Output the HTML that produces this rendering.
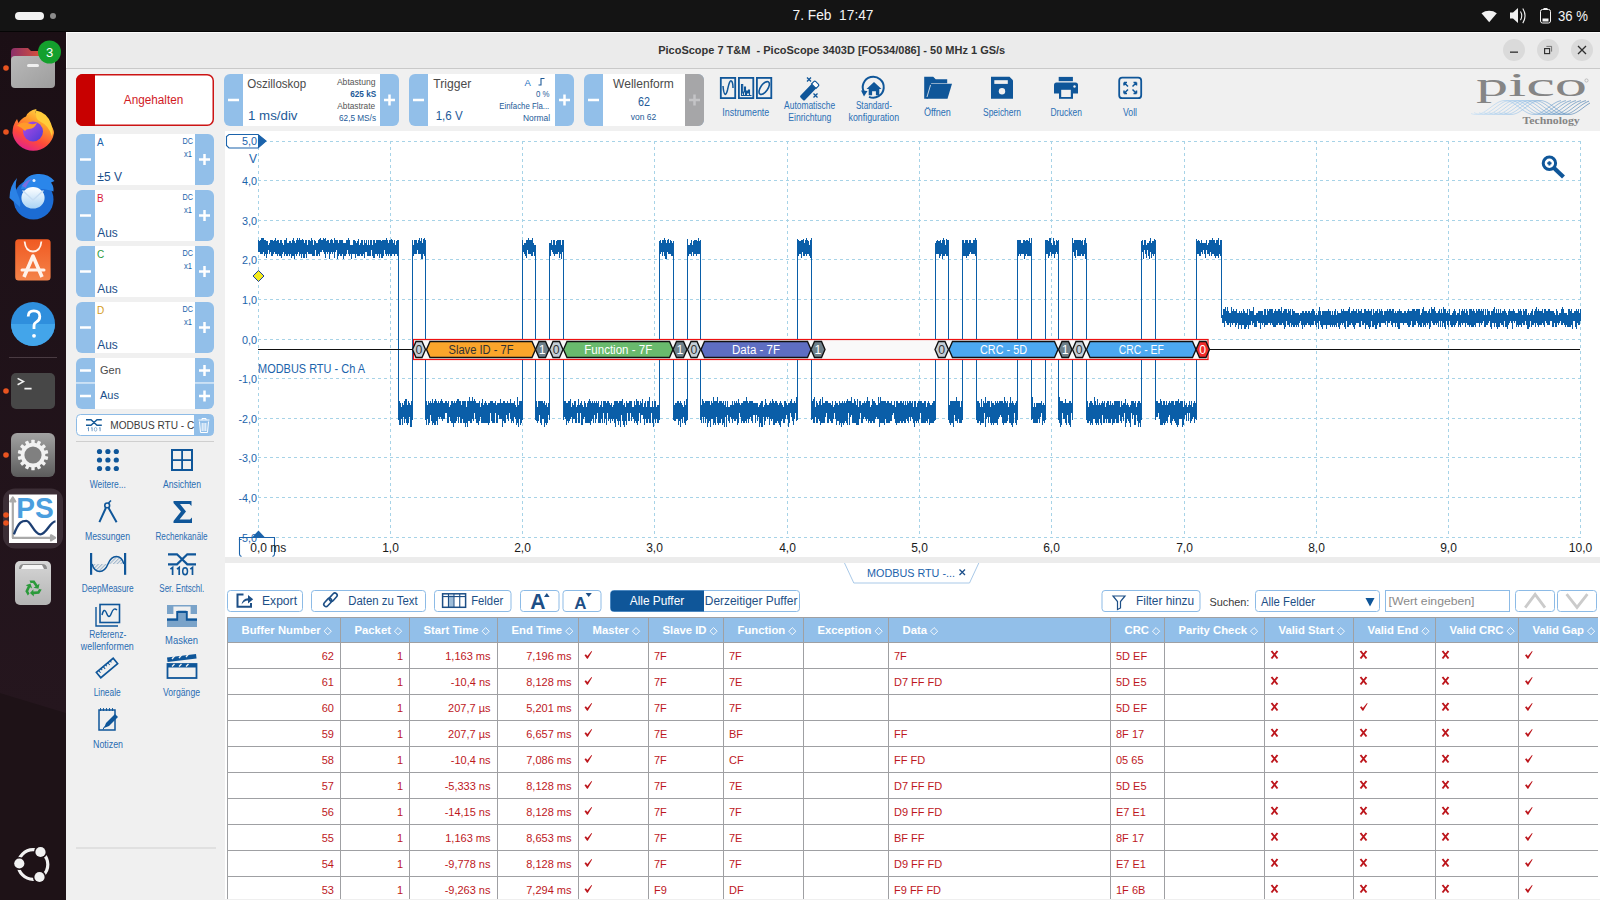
<!DOCTYPE html>
<html><head><meta charset="utf-8"><title>PicoScope 7 T&amp;M</title>
<style>html,body{margin:0;padding:0;background:#fff;overflow:hidden}svg{display:block}text{font-family:"Liberation Sans",sans-serif;white-space:pre}</style></head>
<body><svg width="1600" height="900" viewBox="0 0 1600 900">
<rect x="0" y="0" width="1600" height="31" fill="#141414" />
<rect x="0" y="31" width="1600" height="1" fill="#050505" />
<rect x="15" y="12" width="29" height="8" fill="#f2f2f2" rx="4" />
<circle cx="53" cy="16" r="3" fill="#8c8c8c"/>
<text x="792.5" y="19.9" font-size="14" fill="#f4f4f4" textLength="81" lengthAdjust="spacingAndGlyphs" >7. Feb  17:47</text>
<path d="M1481.5 13.2 A 13 13 0 0 1 1496.8 13.2 L1489.2 22.2 Z" fill="#f2f2f2" />
<path d="M1510 12.5 h3 l5 -4.5 v15 l-5 -4.5 h-3 z" fill="#f2f2f2" />
<path d="M1520.5 11.5 q2.5 4.3 0 8.6 M1522.8 8.5 q4.5 7.3 0 14.6" fill="none" stroke="#f2f2f2" stroke-width="1.1" />
<rect x="1540.5" y="9.5" width="10" height="13.5" fill="none" rx="2" stroke="#f2f2f2" stroke-width="1" />
<rect x="1543.5" y="8" width="4" height="1.5" fill="#f2f2f2" />
<rect x="1542.5" y="18.5" width="6" height="3" fill="#f2f2f2" />
<text x="1558" y="20.5" font-size="14" fill="#f4f4f4" textLength="30" lengthAdjust="spacingAndGlyphs" >36 %</text>
<defs><linearGradient id="dockg" x1="0" y1="0" x2="0" y2="1"><stop offset="0" stop-color="#1b0f15"/><stop offset="1" stop-color="#25161e"/></linearGradient></defs>
<rect x="0" y="32" width="66" height="868" fill="#1e1217" />
<path d="M0 32 H66 V713 L0 693 Z" fill="url(#dockg)" />
<defs><linearGradient id="fold" x1="0" x2="1"><stop offset="0" stop-color="#8b2f6a"/><stop offset="1" stop-color="#d8503a"/></linearGradient><linearGradient id="fgray" x1="0" y1="0" x2="1" y2="1"><stop offset="0" stop-color="#b9b9b9"/><stop offset="1" stop-color="#9d9d9d"/></linearGradient><linearGradient id="ffx" x1="0" y1="0" x2="0" y2="1"><stop offset="0" stop-color="#ffbd2e"/><stop offset="0.55" stop-color="#ff5a2a"/><stop offset="1" stop-color="#e3258f"/></linearGradient><linearGradient id="tbd" x1="0" y1="0" x2="0" y2="1"><stop offset="0" stop-color="#3a8fe8"/><stop offset="1" stop-color="#1a5fc8"/></linearGradient><linearGradient id="apc" x1="0" y1="0" x2="0" y2="1"><stop offset="0" stop-color="#f05a22"/><stop offset="1" stop-color="#f4834a"/></linearGradient><linearGradient id="stg" x1="0" y1="0" x2="0" y2="1"><stop offset="0" stop-color="#a2a2a2"/><stop offset="1" stop-color="#5c5c5c"/></linearGradient><linearGradient id="trs" x1="0" y1="0" x2="0" y2="1"><stop offset="0" stop-color="#d6d6d6"/><stop offset="1" stop-color="#b4b4b4"/></linearGradient></defs>
<path d="M11 52 q0 -4 4 -4 h13 l3 3 h9 v10 h-29 z" fill="url(#fold)" />
<rect x="11" y="56" width="44" height="32" fill="url(#fgray)" rx="4" />
<rect x="27" y="64" width="12" height="3" fill="#f0f0f0" rx="1.5" />
<circle cx="49.5" cy="52" r="11.5" fill="#14a02d"/>
<text x="49.5" y="57" font-size="13" fill="#ffffff" text-anchor="middle" >3</text>
<circle cx="6" cy="68" r="2.8" fill="#e95420"/>
<defs><linearGradient id="ffx2" x1="0.8" y1="0" x2="0.3" y2="1"><stop offset="0" stop-color="#ffe14a"/><stop offset="0.35" stop-color="#ff9a2a"/><stop offset="0.7" stop-color="#ff4a3a"/><stop offset="1" stop-color="#e0208f"/></linearGradient><linearGradient id="ffg" x1="0" y1="0" x2="1" y2="1"><stop offset="0" stop-color="#b24ce6"/><stop offset="1" stop-color="#4b3ad6"/></linearGradient><linearGradient id="tbb" x1="0" y1="0" x2="0" y2="1"><stop offset="0" stop-color="#ffffff"/><stop offset="1" stop-color="#a9d3f5"/></linearGradient></defs>
<path d="M12.5 133 q0 -8 4.5 -14 l1.5 4 q3 -5 7.5 -6.5 q2 -6 10.5 -7.5 q-2 4 1 7 q16 7 16.5 17 a21 21 0 0 1 -41.5 0z" fill="url(#ffx2)" />
<circle cx="33" cy="131.5" r="10" fill="url(#ffg)"/>
<path d="M17 125.5 q5 -5 12 -2 q5 2 8 -1 q-2 6 -8 6.5 q-3 0 -4 2 q-3 -3.5 -8 -5.5z" fill="#ff9a2a" />
<path d="M36 110.5 q11 2 15 13 q2.5 7 1 13 q-3 -11 -12 -15 q-5 -2 -4 -11z" fill="#ffcc3a" />
<path d="M43 131 a10 10 0 0 1 -20 0 q3 6 10 6 q6 0 10 -6z" fill="#ff6a2a" opacity="0.0"/>
<circle cx="6" cy="132" r="2.8" fill="#e95420"/>
<circle cx="33.5" cy="199.5" r="20" fill="#1c6cd4"/>
<path d="M9.5 198 q0 -12 7.5 -20 q-3 9 1 17 q3 6 2 12 z" fill="#2b82e6" />
<path d="M21 189 q3 -14 16 -15 q11 -1 17.5 7 l-3.5 1.5 q3 4 2.5 9 q-10 -4 -32.5 -2.5z" fill="#2a86ea" />
<path d="M22 186 q4 -6 10 -7 q-5 4 -6 9 z" fill="#7a6ee0" />
<circle cx="34" cy="180.5" r="1.5" fill="#e6f2ff"/>
<ellipse cx="33" cy="197.8" rx="11.6" ry="10.8" fill="url(#tbb)"/>
<path d="M22.5 190.5 L33 200 L43.5 190.5" fill="none" stroke="#c6dcf2" stroke-width="1.3" />
<rect x="15.2" y="239.2" width="35.4" height="41.4" fill="url(#apc)" rx="3.5" />
<path d="M24.6 241.5 q1 10 8.4 10 q7.4 0 8.4 -10" fill="none" stroke="#fff2ea" stroke-width="1.8" />
<path d="M24 277 l9 -21 l9 21" fill="none" stroke="#fff2ea" stroke-width="3.6" stroke-linejoin="round"/>
<rect x="20.5" y="268.5" width="25" height="3" fill="#fff2ea" rx="1.5" />
<circle cx="33" cy="324" r="22" fill="#2f8fdd"/>
<path d="M11 324 a22 22 0 0 0 44 0 z" fill="#43a5ea" />
<path d="M28.2 316.5 q0 -5.6 5.6 -5.6 q6 0 6 5.6 q0 3.6 -3.6 5.6 q-2.2 1.2 -2.2 4 v3" fill="none" stroke="#ffffff" stroke-width="2.8" />
<circle cx="34" cy="335.8" r="1.9" fill="#ffffff"/>
<rect x="9" y="357" width="48" height="1" fill="#4a3b42" />
<rect x="11" y="373" width="44" height="36" fill="#474747" rx="5" />
<path d="M17.6 378.4 l5.8 3.2 l-5.8 3.2 M24.4 388.6 h7.2" fill="none" stroke="#f2f2f2" stroke-width="1.6" />
<circle cx="6" cy="391" r="2.8" fill="#e95420"/>
<rect x="11" y="433" width="44" height="44" fill="url(#stg)" rx="6" />
<g transform="translate(33 455)">
<rect x="-1.7" y="-15.3" width="3.4" height="4" rx="0.6" fill="#f2f2f2" transform="rotate(0.00)"/>
<rect x="-1.7" y="-15.3" width="3.4" height="4" rx="0.6" fill="#f2f2f2" transform="rotate(25.71)"/>
<rect x="-1.7" y="-15.3" width="3.4" height="4" rx="0.6" fill="#f2f2f2" transform="rotate(51.43)"/>
<rect x="-1.7" y="-15.3" width="3.4" height="4" rx="0.6" fill="#f2f2f2" transform="rotate(77.14)"/>
<rect x="-1.7" y="-15.3" width="3.4" height="4" rx="0.6" fill="#f2f2f2" transform="rotate(102.86)"/>
<rect x="-1.7" y="-15.3" width="3.4" height="4" rx="0.6" fill="#f2f2f2" transform="rotate(128.57)"/>
<rect x="-1.7" y="-15.3" width="3.4" height="4" rx="0.6" fill="#f2f2f2" transform="rotate(154.29)"/>
<rect x="-1.7" y="-15.3" width="3.4" height="4" rx="0.6" fill="#f2f2f2" transform="rotate(180.00)"/>
<rect x="-1.7" y="-15.3" width="3.4" height="4" rx="0.6" fill="#f2f2f2" transform="rotate(205.71)"/>
<rect x="-1.7" y="-15.3" width="3.4" height="4" rx="0.6" fill="#f2f2f2" transform="rotate(231.43)"/>
<rect x="-1.7" y="-15.3" width="3.4" height="4" rx="0.6" fill="#f2f2f2" transform="rotate(257.14)"/>
<rect x="-1.7" y="-15.3" width="3.4" height="4" rx="0.6" fill="#f2f2f2" transform="rotate(282.86)"/>
<rect x="-1.7" y="-15.3" width="3.4" height="4" rx="0.6" fill="#f2f2f2" transform="rotate(308.57)"/>
<rect x="-1.7" y="-15.3" width="3.4" height="4" rx="0.6" fill="#f2f2f2" transform="rotate(334.29)"/>
<circle r="12.3" fill="#f2f2f2"/><circle r="8.6" fill="#808080"/></g>
<circle cx="6" cy="455" r="2.8" fill="#e95420"/>
<rect x="3" y="488.5" width="60" height="60" fill="#3c2e36" rx="12" />
<rect x="9" y="494.5" width="48" height="48.5" fill="#ffffff" />
<path d="M12.8 538 V499 M10.3 501.5 l2.5 -4 l2.5 4 z M12 537.8 H53 M51 535.3 l4 2.5 l-4 2.5 z" fill="none" stroke="#a9a9a9" stroke-width="2.2" stroke-linejoin="round"/>
<text x="16.2" y="518.3" font-size="30" fill="#4a9ede" font-weight="bold" textLength="37.5" lengthAdjust="spacingAndGlyphs" >PS</text>
<path d="M13.9 534.3 C 19 521, 22 520.8, 26.4 520.8 S 34 534.3, 40.3 534.3 S 50 521.4, 55.5 521.4" fill="none" stroke="#1d3f73" stroke-width="2.3" />
<circle cx="6" cy="515" r="2.8" fill="#e95420"/><circle cx="6" cy="523" r="2.8" fill="#e95420"/>
<rect x="15" y="561" width="36" height="44" fill="url(#trs)" rx="5" />
<path d="M19 569 q0 -5 5 -5 h18 q5 0 5 5 z" fill="#8c8c8c" />
<path d="M21 569 l2 -4 h19 l2 4 z" fill="#f6f6f6" />
<g transform="translate(33 588.5)" fill="#2b9a3a">
<path transform="rotate(0)" d="M-3.5 -8 h5 l3 4.5 l2 -1.2 l-1 5 l-5 -1 l2 -1.2 l-2.5 -3.6 h-2.5 z"/>
<path transform="rotate(120)" d="M-3.5 -8 h5 l3 4.5 l2 -1.2 l-1 5 l-5 -1 l2 -1.2 l-2.5 -3.6 h-2.5 z"/>
<path transform="rotate(240)" d="M-3.5 -8 h5 l3 4.5 l2 -1.2 l-1 5 l-5 -1 l2 -1.2 l-2.5 -3.6 h-2.5 z"/>
</g>
<circle cx="33" cy="864.5" r="14.8" fill="none" stroke="#f2f2f2" stroke-width="3.2"/>
<circle cx="40.5" cy="852" r="6.6" fill="#1e1217"/><circle cx="40.5" cy="852" r="5.1" fill="#f2f2f2"/>
<circle cx="19.3" cy="863.5" r="6.6" fill="#1e1217"/><circle cx="19.3" cy="863.5" r="5.1" fill="#f2f2f2"/>
<circle cx="39.5" cy="877" r="6.6" fill="#1e1217"/><circle cx="39.5" cy="877" r="5.1" fill="#f2f2f2"/>
<rect x="66" y="32" width="1534" height="36" fill="#ebebeb" />
<rect x="66" y="32" width="1534" height="1" fill="#fbfbfb" />
<rect x="66" y="32" width="1" height="37" fill="#fbfbfb" />
<rect x="66" y="68" width="1534" height="1" fill="#c9c9c9" />
<text x="658.2" y="54.2" font-size="11.3" fill="#333333" font-weight="bold" textLength="347" lengthAdjust="spacingAndGlyphs" >PicoScope 7 T&amp;M  - PicoScope 3403D [FO534/086] - 50 MHz 1 GS/s</text>
<circle cx="1514" cy="50" r="11" fill="#dadada"/>
<circle cx="1548" cy="50" r="11" fill="#dadada"/>
<circle cx="1582" cy="50" r="11" fill="#dadada"/>
<rect x="1510" y="51.5" width="8" height="1.3" fill="#2e2e2e" />
<rect x="1544.6" y="48.6" width="5" height="5" fill="none" stroke="#2e2e2e" stroke-width="1.15" />
<path d="M1546.4 46.4 h5.2 v5.2" fill="none" stroke="#5a5a5a" stroke-width="0.8" />
<path d="M1578 46 l8 8 M1586 46 l-8 8" fill="none" stroke="#2e2e2e" stroke-width="1.3" />
<rect x="66" y="69" width="1534" height="62" fill="#f0f0f0" />
<rect x="66" y="131" width="159" height="769" fill="#f0f0f0" />
<rect x="76.75" y="74.75" width="136.5" height="50.5" fill="#ffffff" rx="6" stroke="#cc1414" stroke-width="1.5" />
<path d="M82.5 74 h12.5 v52 h-12.5 a6.5 6.5 0 0 1 -6.5 -6.5 v-39 a6.5 6.5 0 0 1 6.5 -6.5z" fill="#c80000" />
<text x="123.8" y="104.3" font-size="12" fill="#d11a1f" textLength="59.5" lengthAdjust="spacingAndGlyphs" >Angehalten</text>
<rect x="224" y="74" width="175" height="52" fill="#92bfe9" rx="6" />
<rect x="243" y="74" width="137" height="52" fill="#ffffff" />
<rect x="228.0" y="98.75" width="11" height="2.5" fill="#ffffff" />
<rect x="384.0" y="98.75" width="11" height="2.5" fill="#ffffff" />
<rect x="388.25" y="94.5" width="2.5" height="11" fill="#ffffff" />
<text x="247.2" y="88" font-size="12" fill="#4a4a4a" textLength="59" lengthAdjust="spacingAndGlyphs" >Oszilloskop</text>
<text x="248" y="120" font-size="13" fill="#1d5a98" textLength="49.5" lengthAdjust="spacingAndGlyphs" >1 ms/div</text>
<text x="375.6" y="85" font-size="9" fill="#555555" text-anchor="end" textLength="38.7" lengthAdjust="spacingAndGlyphs" >Abtastung</text>
<text x="376.2" y="97" font-size="9" fill="#1d5a98" font-weight="bold" text-anchor="end" textLength="26" lengthAdjust="spacingAndGlyphs" >625 kS</text>
<text x="375.2" y="108.7" font-size="9" fill="#555555" text-anchor="end" textLength="38" lengthAdjust="spacingAndGlyphs" >Abtastrate</text>
<text x="376" y="120.6" font-size="9" fill="#1d5a98" text-anchor="end" textLength="37" lengthAdjust="spacingAndGlyphs" >62,5 MS/s</text>
<rect x="409" y="74" width="165" height="52" fill="#92bfe9" rx="6" />
<rect x="428" y="74" width="127" height="52" fill="#ffffff" />
<rect x="413.0" y="98.75" width="11" height="2.5" fill="#ffffff" />
<rect x="559.0" y="98.75" width="11" height="2.5" fill="#ffffff" />
<rect x="563.25" y="94.5" width="2.5" height="11" fill="#ffffff" />
<text x="433.2" y="87.5" font-size="12" fill="#4a4a4a" textLength="38" lengthAdjust="spacingAndGlyphs" >Trigger</text>
<text x="435.7" y="120" font-size="13" fill="#1d5a98" textLength="27" lengthAdjust="spacingAndGlyphs" >1,6 V</text>
<text x="524.5" y="85.5" font-size="9.5" fill="#1d6fc0" >A</text>
<path d="M538.5 85 h2.5 v-6.5 h3.5" fill="none" stroke="#1d5a98" stroke-width="1.1" />
<text x="549.5" y="97" font-size="9" fill="#1d5a98" text-anchor="end" textLength="13.5" lengthAdjust="spacingAndGlyphs" >0 %</text>
<text x="549.3" y="108.7" font-size="9" fill="#1d5a98" text-anchor="end" textLength="50" lengthAdjust="spacingAndGlyphs" >Einfache Fla...</text>
<text x="550" y="120.7" font-size="9" fill="#1d5a98" text-anchor="end" textLength="27" lengthAdjust="spacingAndGlyphs" >Normal</text>
<rect x="584" y="74" width="120" height="52" fill="#92bfe9" rx="6" />
<path d="M685 74 h13 a6 6 0 0 1 6 6 v40 a6 6 0 0 1 -6 6 h-13 z" fill="#a6a6a8" />
<rect x="603" y="74" width="82" height="52" fill="#ffffff" />
<rect x="588.0" y="98.75" width="11" height="2.5" fill="#ffffff" />
<rect x="689.0" y="98.75" width="11" height="2.5" fill="#c4c4c6" />
<rect x="693.25" y="94.5" width="2.5" height="11" fill="#c4c4c6" />
<text x="643.4" y="87.5" font-size="12" fill="#4a4a4a" text-anchor="middle" textLength="60.7" lengthAdjust="spacingAndGlyphs" >Wellenform</text>
<text x="644" y="105.7" font-size="12" fill="#1d5a98" text-anchor="middle" textLength="12" lengthAdjust="spacingAndGlyphs" >62</text>
<text x="643.5" y="120" font-size="9" fill="#1d5a98" text-anchor="middle" textLength="25.5" lengthAdjust="spacingAndGlyphs" >von 62</text>
<rect x="720.8" y="77.9" width="14.4" height="20.2" fill="none" stroke="#0f5699" stroke-width="1.8" />
<rect x="738.9" y="77.9" width="14.4" height="20.2" fill="none" stroke="#0f5699" stroke-width="1.8" />
<rect x="756.9" y="77.9" width="14.4" height="20.2" fill="none" stroke="#0f5699" stroke-width="1.8" />
<path d="M723 86 C 724 97, 726 96, 727.5 90 C 729 83, 730 80, 731.5 81 C 732.5 82, 733 86, 733 88" fill="none" stroke="#0f5699" stroke-width="1.5" />
<path d="M741 95.5 h10.5 M741.5 95.5 v-11 h1.2 v9 M743.5 95 v-3 h1 v-5 h1 v8 M746.5 95 v-4 h1 v2 h1 v-3 h1 v5" fill="none" stroke="#0f5699" stroke-width="1.1" />
<ellipse cx="764.2" cy="88" rx="3.6" ry="7.4" transform="rotate(35 764.2 88)" fill="none" stroke="#0f5699" stroke-width="1.6"/>
<text x="745.8" y="115.7" font-size="10" fill="#2a6fb5" text-anchor="middle" textLength="47" lengthAdjust="spacingAndGlyphs" >Instrumente</text>
<path d="M800.5 95.5 l12 -12.5 l4.5 4.5 l-12 12.5 q-1 1 -2 0 l-2.5 -2.5 q-1 -1 0 -2z" fill="#0f5699" />
<path d="M811.5 84 l2.3 -2.3 q1 -1 2 0 l2.5 2.5 q1 1 0 2 l-2.3 2.3 z" fill="#ffffff" stroke="#0f5699" stroke-width="1.1" />
<path d="M807 77.5 l4 4 M811 77.5 l-4 4 M813.5 93.5 l4 4 M817.5 93.5 l-4 4" fill="none" stroke="#0f5699" stroke-width="1.3" />
<text x="809.6" y="109.4" font-size="10" fill="#2a6fb5" text-anchor="middle" textLength="51" lengthAdjust="spacingAndGlyphs" >Automatische</text>
<text x="809.8" y="121.3" font-size="10" fill="#2a6fb5" text-anchor="middle" textLength="43" lengthAdjust="spacingAndGlyphs" >Einrichtung</text>
<path d="M864.5 93 A 10.5 10.5 0 1 1 869 96.8" fill="none" stroke="#0f5699" stroke-width="2" />
<path d="M861 90.5 l6.5 0.5 l-3.5 5.5 z" fill="#0f5699" />
<path d="M866.5 89 l7.5 -7 l7.5 7 h-2.2 v6.2 h-3.4 v-4 h-3.8 v4 h-3.4 v-6.2z" fill="#0f5699" />
<text x="873.9" y="109.4" font-size="10" fill="#2a6fb5" text-anchor="middle" textLength="36" lengthAdjust="spacingAndGlyphs" >Standard-</text>
<text x="873.8" y="121.3" font-size="10" fill="#2a6fb5" text-anchor="middle" textLength="50.5" lengthAdjust="spacingAndGlyphs" >konfiguration</text>
<path d="M924.2 98.8 v-22 h9 l2.5 2.5 h11.5 v4 h-16 l-3.5 15.5 z" fill="#0f5699" />
<path d="M926.5 98.8 l4.5 -15 h21 l-4.5 15 z" fill="#0f5699" />
<path d="M927 97 l3.5 -12" fill="none" stroke="#f0f0f0" stroke-width="0.8" />
<text x="937.4" y="115.7" font-size="10" fill="#2a6fb5" text-anchor="middle" textLength="27" lengthAdjust="spacingAndGlyphs" >Öffnen</text>
<path d="M991 76.8 h18.5 l3.5 3.5 v18.5 h-22 z" fill="#0f5699" />
<rect x="994.3" y="80.2" width="13.5" height="3.7" fill="#f0f0f0" />
<circle cx="1002" cy="91.2" r="3.2" fill="#f0f0f0"/>
<text x="1002" y="115.7" font-size="10" fill="#2a6fb5" text-anchor="middle" textLength="38" lengthAdjust="spacingAndGlyphs" >Speichern</text>
<rect x="1058.7" y="76.9" width="14.2" height="4.3" fill="#0f5699" />
<path d="M1054 85 q0 -2.5 2.5 -2.5 h19 q2.5 0 2.5 2.5 v8.5 h-24z" fill="#0f5699" />
<rect x="1059" y="87.5" width="14" height="11.3" fill="#0f5699" />
<rect x="1061.2" y="89.8" width="9.6" height="7.2" fill="#f0f0f0" />
<circle cx="1074.5" cy="86.5" r="1.2" fill="#f0f0f0"/>
<text x="1066.2" y="115.7" font-size="10" fill="#2a6fb5" text-anchor="middle" textLength="31.5" lengthAdjust="spacingAndGlyphs" >Drucken</text>
<rect x="1119.2" y="77.7" width="22" height="20.5" fill="none" rx="3" stroke="#0f5699" stroke-width="1.8" />
<path d="M1124 82.5 l4 4 M1124 82.5 h3 M1124 82.5 v3 M1136.5 82.5 l-4 4 M1136.5 82.5 h-3 M1136.5 82.5 v3 M1124 93.5 l4 -4 M1124 93.5 h3 M1124 93.5 v-3 M1136.5 93.5 l-4 -4 M1136.5 93.5 h-3 M1136.5 93.5 v-3" fill="none" stroke="#0f5699" stroke-width="1.5" />
<text x="1130" y="115.7" font-size="10" fill="#2a6fb5" text-anchor="middle" textLength="14" lengthAdjust="spacingAndGlyphs" >Voll</text>
<defs><linearGradient id="wavg" gradientUnits="userSpaceOnUse" x1="1471" y1="0" x2="1590" y2="0"><stop offset="0" stop-color="#c3def5"/><stop offset="0.45" stop-color="#8fbde6"/><stop offset="1" stop-color="#2f6aa3"/></linearGradient></defs>
<text x="1476" y="96.3" font-size="33" fill="#858585" style="font-family:&quot;Liberation Serif&quot;,serif" textLength="111" lengthAdjust="spacingAndGlyphs" >pico</text>
<circle cx="1586.5" cy="80.5" r="1.6" fill="none" stroke="#a0a0a0" stroke-width="0.6"/>
<path d="M1471.0 113.50 L1473.0 114.13 L1475.0 114.46 L1477.0 114.46 L1479.0 114.13 L1481.0 113.50 L1483.0 112.58 L1485.0 111.43 L1487.0 110.09 L1489.0 108.63 L1491.0 107.12 L1493.0 105.63 L1495.0 104.22 L1497.0 102.97 L1499.0 101.93 L1501.0 101.15 L1503.0 100.66 L1505.0 100.50 L1507.0 100.66 L1509.0 101.15 L1511.0 101.93 L1513.0 102.97 L1515.0 104.22 L1517.0 105.63 L1519.0 107.12 L1521.0 108.63 L1523.0 110.09 L1525.0 111.43 L1527.0 112.58 L1529.0 113.50 L1531.0 114.13 L1533.0 114.46 L1535.0 114.46 L1537.0 114.13 L1539.0 113.50 L1541.0 112.58 L1543.0 111.43 L1545.0 110.09 L1547.0 108.63 L1549.0 107.12 L1551.0 105.63 L1553.0 104.22 L1555.0 102.97 L1557.0 101.93 L1559.0 101.15 L1561.0 100.66 M1474.0 112.58 L1476.0 113.50 L1478.0 114.13 L1480.0 114.46 L1482.0 114.46 L1484.0 114.13 L1486.0 113.50 L1488.0 112.58 L1490.0 111.43 L1492.0 110.09 L1494.0 108.63 L1496.0 107.12 L1498.0 105.63 L1500.0 104.22 L1502.0 102.97 L1504.0 101.93 L1506.0 101.15 L1508.0 100.66 L1510.0 100.50 L1512.0 100.66 L1514.0 101.15 L1516.0 101.93 L1518.0 102.97 L1520.0 104.22 L1522.0 105.63 L1524.0 107.12 L1526.0 108.63 L1528.0 110.09 L1530.0 111.43 L1532.0 112.58 L1534.0 113.50 L1536.0 114.13 L1538.0 114.46 L1540.0 114.46 L1542.0 114.13 L1544.0 113.50 L1546.0 112.58 L1548.0 111.43 L1550.0 110.09 L1552.0 108.63 L1554.0 107.12 L1556.0 105.63 L1558.0 104.22 L1560.0 102.97 L1562.0 101.93 L1564.0 101.15 L1566.0 100.66 M1479.0 112.58 L1481.0 113.50 L1483.0 114.13 L1485.0 114.46 L1487.0 114.46 L1489.0 114.13 L1491.0 113.50 L1493.0 112.58 L1495.0 111.43 L1497.0 110.09 L1499.0 108.63 L1501.0 107.12 L1503.0 105.63 L1505.0 104.22 L1507.0 102.97 L1509.0 101.93 L1511.0 101.15 L1513.0 100.66 L1515.0 100.50 L1517.0 100.66 L1519.0 101.15 L1521.0 101.93 L1523.0 102.97 L1525.0 104.22 L1527.0 105.63 L1529.0 107.12 L1531.0 108.63 L1533.0 110.09 L1535.0 111.43 L1537.0 112.58 L1539.0 113.50 L1541.0 114.13 L1543.0 114.46 L1545.0 114.46 L1547.0 114.13 L1549.0 113.50 L1551.0 112.58 L1553.0 111.43 L1555.0 110.09 L1557.0 108.63 L1559.0 107.12 L1561.0 105.63 L1563.0 104.22 L1565.0 102.97 L1567.0 101.93 L1569.0 101.15 L1571.0 100.66 M1484.0 112.58 L1486.0 113.50 L1488.0 114.13 L1490.0 114.46 L1492.0 114.46 L1494.0 114.13 L1496.0 113.50 L1498.0 112.58 L1500.0 111.43 L1502.0 110.09 L1504.0 108.63 L1506.0 107.12 L1508.0 105.63 L1510.0 104.22 L1512.0 102.97 L1514.0 101.93 L1516.0 101.15 L1518.0 100.66 L1520.0 100.50 L1522.0 100.66 L1524.0 101.15 L1526.0 101.93 L1528.0 102.97 L1530.0 104.22 L1532.0 105.63 L1534.0 107.12 L1536.0 108.63 L1538.0 110.09 L1540.0 111.43 L1542.0 112.58 L1544.0 113.50 L1546.0 114.13 L1548.0 114.46 L1550.0 114.46 L1552.0 114.13 L1554.0 113.50 L1556.0 112.58 L1558.0 111.43 L1560.0 110.09 L1562.0 108.63 L1564.0 107.12 L1566.0 105.63 L1568.0 104.22 L1570.0 102.97 L1572.0 101.93 L1574.0 101.15 L1576.0 100.66 M1489.0 112.58 L1491.0 113.50 L1493.0 114.13 L1495.0 114.46 L1497.0 114.46 L1499.0 114.13 L1501.0 113.50 L1503.0 112.58 L1505.0 111.43 L1507.0 110.09 L1509.0 108.63 L1511.0 107.12 L1513.0 105.63 L1515.0 104.22 L1517.0 102.97 L1519.0 101.93 L1521.0 101.15 L1523.0 100.66 L1525.0 100.50 L1527.0 100.66 L1529.0 101.15 L1531.0 101.93 L1533.0 102.97 L1535.0 104.22 L1537.0 105.63 L1539.0 107.12 L1541.0 108.63 L1543.0 110.09 L1545.0 111.43 L1547.0 112.58 L1549.0 113.50 L1551.0 114.13 L1553.0 114.46 L1555.0 114.46 L1557.0 114.13 L1559.0 113.50 L1561.0 112.58 L1563.0 111.43 L1565.0 110.09 L1567.0 108.63 L1569.0 107.12 L1571.0 105.63 L1573.0 104.22 L1575.0 102.97 L1577.0 101.93 L1579.0 101.15 L1581.0 100.66 M1494.0 112.58 L1496.0 113.50 L1498.0 114.13 L1500.0 114.46 L1502.0 114.46 L1504.0 114.13 L1506.0 113.50 L1508.0 112.58 L1510.0 111.43 L1512.0 110.09 L1514.0 108.63 L1516.0 107.12 L1518.0 105.63 L1520.0 104.22 L1522.0 102.97 L1524.0 101.93 L1526.0 101.15 L1528.0 100.66 L1530.0 100.50 L1532.0 100.66 L1534.0 101.15 L1536.0 101.93 L1538.0 102.97 L1540.0 104.22 L1542.0 105.63 L1544.0 107.12 L1546.0 108.63 L1548.0 110.09 L1550.0 111.43 L1552.0 112.58 L1554.0 113.50 L1556.0 114.13 L1558.0 114.46 L1560.0 114.46 L1562.0 114.13 L1564.0 113.50 L1566.0 112.58 L1568.0 111.43 L1570.0 110.09 L1572.0 108.63 L1574.0 107.12 L1576.0 105.63 L1578.0 104.22 L1580.0 102.97 L1582.0 101.93 L1584.0 101.15 L1586.0 100.66 M1499.0 112.58 L1501.0 113.50 L1503.0 114.13 L1505.0 114.46 L1507.0 114.46 L1509.0 114.13 L1511.0 113.50 L1513.0 112.58 L1515.0 111.43 L1517.0 110.09 L1519.0 108.63 L1521.0 107.12 L1523.0 105.63 L1525.0 104.22 L1527.0 102.97 L1529.0 101.93 L1531.0 101.15 L1533.0 100.66 L1535.0 100.50 L1537.0 100.66 L1539.0 101.15 L1541.0 101.93 L1543.0 102.97 L1545.0 104.22 L1547.0 105.63 L1549.0 107.12 L1551.0 108.63 L1553.0 110.09 L1555.0 111.43 L1557.0 112.58 L1559.0 113.50 L1561.0 114.13 L1563.0 114.46 L1565.0 114.46 L1567.0 114.13 L1569.0 113.50 L1571.0 112.58 L1573.0 111.43 L1575.0 110.09 L1577.0 108.63 L1579.0 107.12 L1581.0 105.63 L1583.0 104.22 L1585.0 102.97 L1587.0 101.93 L1589.0 101.15 M1504.0 112.58 L1506.0 113.50 L1508.0 114.13 L1510.0 114.46 L1512.0 114.46 L1514.0 114.13 L1516.0 113.50 L1518.0 112.58 L1520.0 111.43 L1522.0 110.09 L1524.0 108.63 L1526.0 107.12 L1528.0 105.63 L1530.0 104.22 L1532.0 102.97 L1534.0 101.93 L1536.0 101.15 L1538.0 100.66 L1540.0 100.50 L1542.0 100.66 L1544.0 101.15 L1546.0 101.93 L1548.0 102.97 L1550.0 104.22 L1552.0 105.63 L1554.0 107.12 L1556.0 108.63 L1558.0 110.09 L1560.0 111.43 L1562.0 112.58 L1564.0 113.50 L1566.0 114.13 L1568.0 114.46 L1570.0 114.46 L1572.0 114.13 L1574.0 113.50 L1576.0 112.58 L1578.0 111.43 L1580.0 110.09 L1582.0 108.63 L1584.0 107.12 L1586.0 105.63 L1588.0 104.22 L1590.0 102.97" fill="none" stroke="url(#wavg)" stroke-width="0.6" />
<text x="1522.4" y="123.7" font-size="10" fill="#858585" style="font-family:&quot;Liberation Serif&quot;,serif" font-weight="bold" textLength="57.4" lengthAdjust="spacingAndGlyphs" >Technology</text>
<rect x="76" y="134" width="138" height="51" fill="#92bfe9" rx="6" />
<rect x="95" y="134" width="100" height="51" fill="#ffffff" />
<rect x="80.0" y="158.25" width="11" height="2.5" fill="#ffffff" />
<rect x="199.0" y="158.25" width="11" height="2.5" fill="#ffffff" />
<rect x="203.25" y="154.0" width="2.5" height="11" fill="#ffffff" />
<text x="96.9" y="145.5" font-size="10" fill="#1b63ab" >A</text>
<text x="193" y="144" font-size="9" fill="#1b63ab" text-anchor="end" textLength="10.5" lengthAdjust="spacingAndGlyphs" >DC</text>
<text x="192" y="156.7" font-size="9" fill="#1b63ab" text-anchor="end" textLength="8" lengthAdjust="spacingAndGlyphs" >x1</text>
<text x="97.3" y="181" font-size="12" fill="#1b4f8a" textLength="24.6" lengthAdjust="spacingAndGlyphs" >±5 V</text>
<rect x="76" y="190" width="138" height="51" fill="#92bfe9" rx="6" />
<rect x="95" y="190" width="100" height="51" fill="#ffffff" />
<rect x="80.0" y="214.25" width="11" height="2.5" fill="#ffffff" />
<rect x="199.0" y="214.25" width="11" height="2.5" fill="#ffffff" />
<rect x="203.25" y="210.0" width="2.5" height="11" fill="#ffffff" />
<text x="96.9" y="201.5" font-size="10" fill="#d81b3a" >B</text>
<text x="193" y="200" font-size="9" fill="#1b63ab" text-anchor="end" textLength="10.5" lengthAdjust="spacingAndGlyphs" >DC</text>
<text x="192" y="212.7" font-size="9" fill="#1b63ab" text-anchor="end" textLength="8" lengthAdjust="spacingAndGlyphs" >x1</text>
<text x="97.3" y="237" font-size="12" fill="#1b4f8a" textLength="20.5" lengthAdjust="spacingAndGlyphs" >Aus</text>
<rect x="76" y="246" width="138" height="51" fill="#92bfe9" rx="6" />
<rect x="95" y="246" width="100" height="51" fill="#ffffff" />
<rect x="80.0" y="270.25" width="11" height="2.5" fill="#ffffff" />
<rect x="199.0" y="270.25" width="11" height="2.5" fill="#ffffff" />
<rect x="203.25" y="266.0" width="2.5" height="11" fill="#ffffff" />
<text x="96.9" y="257.5" font-size="10" fill="#2a9a3a" >C</text>
<text x="193" y="256" font-size="9" fill="#1b63ab" text-anchor="end" textLength="10.5" lengthAdjust="spacingAndGlyphs" >DC</text>
<text x="192" y="268.7" font-size="9" fill="#1b63ab" text-anchor="end" textLength="8" lengthAdjust="spacingAndGlyphs" >x1</text>
<text x="97.3" y="293" font-size="12" fill="#1b4f8a" textLength="20.5" lengthAdjust="spacingAndGlyphs" >Aus</text>
<rect x="76" y="302" width="138" height="51" fill="#92bfe9" rx="6" />
<rect x="95" y="302" width="100" height="51" fill="#ffffff" />
<rect x="80.0" y="326.25" width="11" height="2.5" fill="#ffffff" />
<rect x="199.0" y="326.25" width="11" height="2.5" fill="#ffffff" />
<rect x="203.25" y="322.0" width="2.5" height="11" fill="#ffffff" />
<text x="96.9" y="313.5" font-size="10" fill="#d49a1a" >D</text>
<text x="193" y="312" font-size="9" fill="#1b63ab" text-anchor="end" textLength="10.5" lengthAdjust="spacingAndGlyphs" >DC</text>
<text x="192" y="324.7" font-size="9" fill="#1b63ab" text-anchor="end" textLength="8" lengthAdjust="spacingAndGlyphs" >x1</text>
<text x="97.3" y="349" font-size="12" fill="#1b4f8a" textLength="20.5" lengthAdjust="spacingAndGlyphs" >Aus</text>
<rect x="76" y="358" width="138" height="51" fill="#92bfe9" rx="6" />
<rect x="95" y="358" width="100" height="51" fill="#ffffff" />
<rect x="76" y="382.3" width="19" height="1.3" fill="#e6f0fa" />
<rect x="195" y="382.3" width="19" height="1.3" fill="#e6f0fa" />
<rect x="80" y="369.25" width="11" height="2.5" fill="#ffffff" />
<rect x="199" y="369.25" width="11" height="2.5" fill="#ffffff" />
<rect x="203.25" y="365.0" width="2.5" height="11" fill="#ffffff" />
<rect x="80" y="394.75" width="11" height="2.5" fill="#ffffff" />
<rect x="199" y="394.75" width="11" height="2.5" fill="#ffffff" />
<rect x="203.25" y="390.5" width="2.5" height="11" fill="#ffffff" />
<text x="100" y="373.6" font-size="11" fill="#4a4a4a" >Gen</text>
<text x="100" y="399.4" font-size="11" fill="#1b4f8a" >Aus</text>
<rect x="76.5" y="414.5" width="137" height="21" fill="#ffffff" rx="4" stroke="#8dbbe6" stroke-width="1" />
<path d="M194 414.5 h15.5 a4 4 0 0 1 4 4 v13 a4 4 0 0 1 -4 4 h-15.5z" fill="#92bfe9" />
<path d="M198.5 420 h11 M202 420 v-1.5 h4 v1.5 M199.5 421.5 l1 11 h7 l1 -11 M202.2 423 v8 M204 423 v8 M205.8 423 v8" fill="none" stroke="#ffffff" stroke-width="1" />
<path d="M86 419.7 H91 L97 425.3 H101.8 M86 425.3 H91 L97 419.7 H101.8" fill="none" stroke="#155a98" stroke-width="1.4" />
<path d="M87.6 428.2 l0.9 -0.8 V431.2 M91.2 428.2 l0.9 -0.8 V431.2 M99.2 428.2 l0.9 -0.8 V431.2" fill="none" stroke="#5f8fbd" stroke-width="0.9" />
<ellipse cx="95.6" cy="429.3" rx="1.3" ry="1.9" fill="none" stroke="#7aa3c9" stroke-width="0.8"/>
<text x="110.3" y="429" font-size="11" fill="#3a3a3a" textLength="84" lengthAdjust="spacingAndGlyphs" >MODBUS RTU - C</text>
<rect x="76" y="441" width="138" height="1" fill="#cfcfcf" />
<rect x="76" y="847.5" width="140" height="1" fill="#cfcfcf" />
<circle cx="99.5" cy="451.5" r="2.6" fill="#0f5699"/>
<circle cx="107.9" cy="451.5" r="2.6" fill="#0f5699"/>
<circle cx="116.3" cy="451.5" r="2.6" fill="#0f5699"/>
<circle cx="99.5" cy="460.0" r="2.6" fill="#0f5699"/>
<circle cx="107.9" cy="460.0" r="2.6" fill="#0f5699"/>
<circle cx="116.3" cy="460.0" r="2.6" fill="#0f5699"/>
<circle cx="99.5" cy="468.5" r="2.6" fill="#0f5699"/>
<circle cx="107.9" cy="468.5" r="2.6" fill="#0f5699"/>
<circle cx="116.3" cy="468.5" r="2.6" fill="#0f5699"/>
<text x="107.8" y="488.2" font-size="10" fill="#2a6db3" text-anchor="middle" textLength="36" lengthAdjust="spacingAndGlyphs" >Weitere...</text>
<rect x="172" y="450" width="20" height="20" fill="none" stroke="#0f5699" stroke-width="2" />
<rect x="181.2" y="450" width="1.8" height="20" fill="#0f5699" />
<rect x="172" y="459.2" width="20" height="1.8" fill="#0f5699" />
<text x="182" y="488.2" font-size="10" fill="#2a6db3" text-anchor="middle" textLength="38" lengthAdjust="spacingAndGlyphs" >Ansichten</text>
<path d="M105.8 508 l-6.4 14.2 M108.6 508 l8 14.2" fill="none" stroke="#0f5699" stroke-width="2" />
<circle cx="107.2" cy="505.4" r="2.4" fill="none" stroke="#0f5699" stroke-width="1.6"/>
<path d="M108.5 503 l2.5 -2.5" fill="none" stroke="#0f5699" stroke-width="1.6" />
<text x="107.5" y="540.2" font-size="10" fill="#2a6db3" text-anchor="middle" textLength="45" lengthAdjust="spacingAndGlyphs" >Messungen</text>
<path d="M173.5 501 h18 v5 l-2 -2 h-9.5 l6 7.5 l-6.5 8 h10.5 l2 -2 v5.5 h-18.5 v-2 l7.5 -9.5 l-7.5 -8.5z" fill="#0f5699" />
<text x="181.5" y="540.2" font-size="10" fill="#2a6db3" text-anchor="middle" textLength="52" lengthAdjust="spacingAndGlyphs" >Rechenkanäle</text>
<defs><pattern id="hat" width="2.6" height="2.6" patternUnits="userSpaceOnUse" patternTransform="rotate(45)"><rect width="1.1" height="2.6" fill="#9fb6cc"/></pattern></defs>
<path d="M92 564 C 95 574, 104 574, 108 564 C 112 554, 121 554, 124 564 Z" fill="url(#hat)" />
<rect x="90" y="553" width="2.2" height="21.8" fill="#0f5699" />
<rect x="124" y="553" width="2.2" height="21.8" fill="#0f5699" />
<path d="M92 564 C 95 574, 104 574, 108 564 C 112 554, 121 554, 124 564" fill="none" stroke="#0f5699" stroke-width="1.5" />
<text x="107.7" y="592.2" font-size="10" fill="#2a6db3" text-anchor="middle" textLength="52" lengthAdjust="spacingAndGlyphs" >DeepMeasure</text>
<path d="M168 554.3 H177 L187.3 564.3 H196 M168 564.3 H177 L187.3 554.3 H196" fill="none" stroke="#0f5699" stroke-width="2.2" />
<path d="M170.4 569.2 l2.2 -1.7 V575 M177 569.2 l2.2 -1.7 V575 M190.3 569.2 l2.2 -1.7 V575" fill="none" stroke="#0f5699" stroke-width="1.7" />
<ellipse cx="185.1" cy="571.2" rx="2.4" ry="3.5" fill="none" stroke="#0f5699" stroke-width="1.5"/>
<text x="181.8" y="592.2" font-size="10" fill="#2a6db3" text-anchor="middle" textLength="45" lengthAdjust="spacingAndGlyphs" >Ser. Entschl.</text>
<path d="M96 607 v19 h22" fill="none" stroke="#0f5699" stroke-width="1.4" />
<rect x="100" y="604.5" width="19.5" height="18" fill="none" stroke="#0f5699" stroke-width="1.6" />
<path d="M102 615 q2 -8 4.5 -2 q2.5 7 5 0 q2 -6 5.5 -3" fill="none" stroke="#0f5699" stroke-width="1.4" />
<text x="107.7" y="638.2" font-size="10" fill="#2a6db3" text-anchor="middle" textLength="37" lengthAdjust="spacingAndGlyphs" >Referenz-</text>
<text x="107.3" y="649.8000000000001" font-size="10" fill="#2a6db3" text-anchor="middle" textLength="53" lengthAdjust="spacingAndGlyphs" >wellenformen</text>
<rect x="167" y="605" width="30" height="22" fill="#7aa3c9" />
<path d="M167 616 h8.5 v-7.5 h13 v7.5 h8.5" fill="none" stroke="#f0f0f0" stroke-width="4.2" />
<path d="M167 619.8 h10.2 v-7.8 h9.6 v7.8 h10.2" fill="none" stroke="#0f5699" stroke-width="1.9" />
<text x="181.6" y="644.2" font-size="10" fill="#2a6db3" text-anchor="middle" textLength="33" lengthAdjust="spacingAndGlyphs" >Masken</text>
<g transform="rotate(-40 107 668)"><rect x="96" y="664.5" width="22" height="7" fill="none" stroke="#0f5699" stroke-width="1.6"/><path d="M99 664.5 v3 M102 664.5 v2 M105 664.5 v3 M108 664.5 v2 M111 664.5 v3 M114 664.5 v2" stroke="#0f5699" stroke-width="1"/></g>
<text x="107.2" y="696.2" font-size="10" fill="#2a6db3" text-anchor="middle" textLength="27" lengthAdjust="spacingAndGlyphs" >Lineale</text>
<rect x="167.5" y="664" width="29" height="14" fill="none" stroke="#0f5699" stroke-width="1.8" />
<rect x="167" y="664" width="30" height="3.5" fill="#0f5699" />
<path d="M167 657.5 l29 -3.5 l0.6 4.5 l-29 3.5z" fill="#0f5699" />
<path d="M172 659 l3 -3.5 M179 658 l3 -3.5 M186 657 l3 -3.5 M172 666.5 l2.5 -2.5 M179 666.5 l2.5 -2.5 M186 666.5 l2.5 -2.5" fill="none" stroke="#f0f0f0" stroke-width="1.3" />
<text x="181.5" y="696.2" font-size="10" fill="#2a6db3" text-anchor="middle" textLength="37" lengthAdjust="spacingAndGlyphs" >Vorgänge</text>
<path d="M99 710 h16 v20 h-16z" fill="none" stroke="#0f5699" stroke-width="1.5" />
<path d="M100.5 708 v3 M103.5 708 v3 M106.5 708 v3 M109.5 708 v3 M112.5 708 v3" fill="none" stroke="#0f5699" stroke-width="0.9" />
<path d="M104 728 l2 -5 l9 -9 l3 3 l-9 9 z" fill="#0f5699" />
<path d="M103 729.5 l1.5 -3" fill="none" stroke="#0f5699" stroke-width="1" />
<text x="108" y="748.2" font-size="10" fill="#2a6db3" text-anchor="middle" textLength="30" lengthAdjust="spacingAndGlyphs" >Notizen</text>
<rect x="225" y="131" width="1375" height="426" fill="#ffffff" />
<rect x="225" y="557" width="1375" height="6" fill="#ececec" />
<line x1="258" y1="141.5" x2="1581" y2="141.5" stroke="#a7d3e7" stroke-width="1" stroke-dasharray="3 3"/>
<line x1="258" y1="180.5" x2="1581" y2="180.5" stroke="#a7d3e7" stroke-width="1" stroke-dasharray="3 3"/>
<line x1="258" y1="220.5" x2="1581" y2="220.5" stroke="#a7d3e7" stroke-width="1" stroke-dasharray="3 3"/>
<line x1="258" y1="259.5" x2="1581" y2="259.5" stroke="#a7d3e7" stroke-width="1" stroke-dasharray="3 3"/>
<line x1="258" y1="299.5" x2="1581" y2="299.5" stroke="#a7d3e7" stroke-width="1" stroke-dasharray="3 3"/>
<line x1="258" y1="339.5" x2="1581" y2="339.5" stroke="#a7d3e7" stroke-width="1" stroke-dasharray="3 3"/>
<line x1="258" y1="378.5" x2="1581" y2="378.5" stroke="#a7d3e7" stroke-width="1" stroke-dasharray="3 3"/>
<line x1="258" y1="418.5" x2="1581" y2="418.5" stroke="#a7d3e7" stroke-width="1" stroke-dasharray="3 3"/>
<line x1="258" y1="457.5" x2="1581" y2="457.5" stroke="#a7d3e7" stroke-width="1" stroke-dasharray="3 3"/>
<line x1="258" y1="497.5" x2="1581" y2="497.5" stroke="#a7d3e7" stroke-width="1" stroke-dasharray="3 3"/>
<line x1="258" y1="537.5" x2="1581" y2="537.5" stroke="#a7d3e7" stroke-width="1" stroke-dasharray="3 3"/>
<line x1="258.5" y1="141" x2="258.5" y2="538" stroke="#a7d3e7" stroke-width="1" stroke-dasharray="3 3"/>
<line x1="390.5" y1="141" x2="390.5" y2="538" stroke="#a7d3e7" stroke-width="1" stroke-dasharray="3 3"/>
<line x1="522.5" y1="141" x2="522.5" y2="538" stroke="#a7d3e7" stroke-width="1" stroke-dasharray="3 3"/>
<line x1="654.5" y1="141" x2="654.5" y2="538" stroke="#a7d3e7" stroke-width="1" stroke-dasharray="3 3"/>
<line x1="787.5" y1="141" x2="787.5" y2="538" stroke="#a7d3e7" stroke-width="1" stroke-dasharray="3 3"/>
<line x1="919.5" y1="141" x2="919.5" y2="538" stroke="#a7d3e7" stroke-width="1" stroke-dasharray="3 3"/>
<line x1="1051.5" y1="141" x2="1051.5" y2="538" stroke="#a7d3e7" stroke-width="1" stroke-dasharray="3 3"/>
<line x1="1184.5" y1="141" x2="1184.5" y2="538" stroke="#a7d3e7" stroke-width="1" stroke-dasharray="3 3"/>
<line x1="1316.5" y1="141" x2="1316.5" y2="538" stroke="#a7d3e7" stroke-width="1" stroke-dasharray="3 3"/>
<line x1="1448.5" y1="141" x2="1448.5" y2="538" stroke="#a7d3e7" stroke-width="1" stroke-dasharray="3 3"/>
<line x1="1580.5" y1="141" x2="1580.5" y2="538" stroke="#a7d3e7" stroke-width="1" stroke-dasharray="3 3"/>
<text x="257" y="184.7" font-size="11.5" fill="#1b63ab" text-anchor="end" textLength="15" lengthAdjust="spacingAndGlyphs" >4,0</text>
<text x="257" y="224.7" font-size="11.5" fill="#1b63ab" text-anchor="end" textLength="15" lengthAdjust="spacingAndGlyphs" >3,0</text>
<text x="257" y="263.7" font-size="11.5" fill="#1b63ab" text-anchor="end" textLength="15" lengthAdjust="spacingAndGlyphs" >2,0</text>
<text x="257" y="303.7" font-size="11.5" fill="#1b63ab" text-anchor="end" textLength="15" lengthAdjust="spacingAndGlyphs" >1,0</text>
<text x="257" y="343.7" font-size="11.5" fill="#1b63ab" text-anchor="end" textLength="15" lengthAdjust="spacingAndGlyphs" >0,0</text>
<text x="257" y="382.7" font-size="11.5" fill="#1b63ab" text-anchor="end" textLength="18.5" lengthAdjust="spacingAndGlyphs" >-1,0</text>
<text x="257" y="422.7" font-size="11.5" fill="#1b63ab" text-anchor="end" textLength="18.5" lengthAdjust="spacingAndGlyphs" >-2,0</text>
<text x="257" y="461.7" font-size="11.5" fill="#1b63ab" text-anchor="end" textLength="18.5" lengthAdjust="spacingAndGlyphs" >-3,0</text>
<text x="257" y="501.7" font-size="11.5" fill="#1b63ab" text-anchor="end" textLength="18.5" lengthAdjust="spacingAndGlyphs" >-4,0</text>
<text x="257" y="541.7" font-size="11.5" fill="#1b63ab" text-anchor="end" textLength="18.5" lengthAdjust="spacingAndGlyphs" >-5,0</text>
<text x="257" y="162.7" font-size="12" fill="#1b63ab" text-anchor="end" >V</text>
<path d="M229 134.5 h29 l8 6.5 l-8 7 h-29 l-2.5 -2.5 v-9 z" fill="#ffffff" stroke="#1b63ab" stroke-width="1.1" />
<path d="M258 134.2 l8 6.8 l-8 7 z" fill="#1b63ab" />
<text x="257" y="145" font-size="11.5" fill="#1b63ab" text-anchor="end" textLength="15" lengthAdjust="spacingAndGlyphs" >5,0</text>
<text x="390.5" y="551.8" font-size="12" fill="#1a1a1a" text-anchor="middle" >1,0</text>
<text x="522.5" y="551.8" font-size="12" fill="#1a1a1a" text-anchor="middle" >2,0</text>
<text x="654.5" y="551.8" font-size="12" fill="#1a1a1a" text-anchor="middle" >3,0</text>
<text x="787.5" y="551.8" font-size="12" fill="#1a1a1a" text-anchor="middle" >4,0</text>
<text x="919.5" y="551.8" font-size="12" fill="#1a1a1a" text-anchor="middle" >5,0</text>
<text x="1051.5" y="551.8" font-size="12" fill="#1a1a1a" text-anchor="middle" >6,0</text>
<text x="1184.5" y="551.8" font-size="12" fill="#1a1a1a" text-anchor="middle" >7,0</text>
<text x="1316.5" y="551.8" font-size="12" fill="#1a1a1a" text-anchor="middle" >8,0</text>
<text x="1448.5" y="551.8" font-size="12" fill="#1a1a1a" text-anchor="middle" >9,0</text>
<text x="1580.5" y="551.8" font-size="12" fill="#1a1a1a" text-anchor="middle" >10,0</text>
<path d="M241.5 556.5 q-2 -0.5 -2 -2.5 V537.5 H274.5 V554 q0 2 -2 2.5" fill="none" stroke="#1b63ab" stroke-width="1.1" />
<path d="M252 537.5 l6.5 -7 l6.5 7 z" fill="#1b63ab" />
<text x="250.3" y="551.8" font-size="12" fill="#1a1a1a" >0,0 ms</text>
<path d="M258.5 240V252M259.5 241V252M260.5 240V254M261.5 238V254M262.5 238V254M263.5 238V252M264.5 240V256M265.5 240V254M266.5 241V258M267.5 241V254M268.5 245V250M269.5 243V254M270.5 240V252M271.5 240V256M272.5 240V256M273.5 241V254M274.5 240V252M275.5 238V254M276.5 241V254M277.5 240V256M278.5 240V254M279.5 243V256M280.5 240V256M281.5 240V258M282.5 243V254M283.5 245V252M284.5 240V256M285.5 240V254M286.5 238V256M287.5 243V256M288.5 243V254M289.5 241V256M290.5 241V254M291.5 243V258M292.5 240V256M293.5 238V256M294.5 241V259M295.5 243V254M296.5 240V256M297.5 238V254M298.5 240V252M299.5 238V256M300.5 240V254M301.5 240V258M302.5 239V254M303.5 240V258M304.5 243V258M305.5 240V254M306.5 240V258M307.5 245V252M308.5 240V254M309.5 240V254M310.5 241V254M311.5 238V254M312.5 240V256M313.5 245V256M314.5 240V256M315.5 241V250M316.5 243V256M317.5 243V256M318.5 240V254M319.5 239V256M320.5 238V252M321.5 240V252M322.5 240V250M323.5 238V252M324.5 239V254M325.5 238V258M326.5 241V252M327.5 240V254M328.5 240V252M329.5 243V259M330.5 240V254M331.5 239V252M332.5 240V254M333.5 243V252M334.5 238V258M335.5 240V252M336.5 240V250M337.5 240V259M338.5 243V256M339.5 240V254M340.5 240V256M341.5 240V256M342.5 240V254M343.5 243V259M344.5 243V256M345.5 243V256M346.5 240V254M347.5 240V250M348.5 238V254M349.5 240V256M350.5 245V254M351.5 245V259M352.5 245V254M353.5 240V254M354.5 240V254M355.5 241V258M356.5 243V254M357.5 241V256M358.5 239V256M359.5 245V256M360.5 243V254M361.5 240V256M362.5 240V256M363.5 245V254M364.5 240V258M365.5 243V252M366.5 240V252M367.5 245V256M368.5 240V256M369.5 245V256M370.5 240V256M371.5 240V250M372.5 245V256M373.5 240V258M374.5 240V258M375.5 243V254M376.5 240V254M377.5 240V256M378.5 240V254M379.5 240V258M380.5 240V254M381.5 241V258M382.5 240V258M383.5 240V256M384.5 240V250M385.5 240V254M386.5 238V256M387.5 240V254M388.5 243V256M389.5 240V254M390.5 240V256M391.5 239V256M392.5 240V254M393.5 243V254M394.5 240V256M395.5 245V254M396.5 241V254M397.5 240V256M398.5 240V256M399.5 401V425M400.5 403V425M401.5 407V419M402.5 403V425M403.5 405V417M404.5 401V423M405.5 399V419M406.5 399V423M407.5 405V425M408.5 401V423M409.5 403V417M410.5 405V427M411.5 401V427M412.5 240V254M413.5 245V256M414.5 240V254M415.5 240V254M416.5 240V254M417.5 243V250M418.5 240V254M419.5 238V254M420.5 241V254M421.5 238V259M422.5 243V259M423.5 239V254M424.5 238V256M425.5 240V252M426.5 401V425M427.5 405V419M428.5 401V425M429.5 403V423M430.5 401V415M431.5 403V421M432.5 399V425M433.5 403V423M434.5 401V425M435.5 399V425M436.5 401V421M437.5 403V425M438.5 401V417M439.5 403V419M440.5 401V417M441.5 399V419M442.5 401V421M443.5 403V419M444.5 403V419M445.5 401V413M446.5 401V413M447.5 403V423M448.5 401V423M449.5 407V417M450.5 405V421M451.5 401V423M452.5 401V423M453.5 403V427M454.5 401V423M455.5 403V423M456.5 401V421M457.5 399V417M458.5 399V423M459.5 401V417M460.5 401V423M461.5 405V423M462.5 401V419M463.5 401V423M464.5 401V423M465.5 401V427M466.5 407V423M467.5 401V427M468.5 401V421M469.5 397V421M470.5 401V423M471.5 401V423M472.5 397V419M473.5 401V421M474.5 399V413M475.5 401V419M476.5 403V423M477.5 403V423M478.5 403V425M479.5 401V421M480.5 407V417M481.5 403V423M482.5 399V423M483.5 405V423M484.5 403V423M485.5 401V423M486.5 403V423M487.5 405V423M488.5 403V425M489.5 403V423M490.5 401V413M491.5 401V421M492.5 401V423M493.5 403V423M494.5 403V423M495.5 401V413M496.5 405V423M497.5 403V423M498.5 403V415M499.5 403V419M500.5 399V419M501.5 403V419M502.5 403V427M503.5 401V421M504.5 401V423M505.5 403V423M506.5 403V415M507.5 401V419M508.5 403V421M509.5 403V413M510.5 399V419M511.5 403V423M512.5 403V421M513.5 403V423M514.5 401V417M515.5 405V419M516.5 407V425M517.5 397V423M518.5 405V427M519.5 401V419M520.5 401V425M521.5 401V423M522.5 240V254M523.5 245V252M524.5 243V254M525.5 243V256M526.5 240V258M527.5 240V250M528.5 238V254M529.5 240V254M530.5 240V254M531.5 240V256M532.5 238V256M533.5 243V252M534.5 245V256M535.5 245V254M536.5 401V421M537.5 407V423M538.5 401V421M539.5 401V415M540.5 401V423M541.5 401V425M542.5 401V419M543.5 403V419M544.5 401V427M545.5 405V423M546.5 403V425M547.5 407V423M548.5 403V415M549.5 243V254M550.5 243V256M551.5 240V250M552.5 245V252M553.5 240V254M554.5 240V256M555.5 245V254M556.5 241V254M557.5 240V254M558.5 240V252M559.5 240V258M560.5 240V254M561.5 245V259M562.5 240V252M563.5 240V252M564.5 401V417M565.5 401V419M566.5 403V425M567.5 403V421M568.5 401V423M569.5 401V421M570.5 399V419M571.5 407V417M572.5 403V423M573.5 405V419M574.5 401V419M575.5 401V423M576.5 407V423M577.5 405V413M578.5 399V423M579.5 405V423M580.5 403V413M581.5 401V425M582.5 405V425M583.5 407V419M584.5 401V417M585.5 403V423M586.5 407V423M587.5 403V423M588.5 401V423M589.5 399V423M590.5 401V425M591.5 403V421M592.5 401V419M593.5 403V423M594.5 401V415M595.5 403V423M596.5 401V419M597.5 403V413M598.5 401V423M599.5 407V423M600.5 405V423M601.5 401V419M602.5 407V423M603.5 401V413M604.5 401V423M605.5 401V419M606.5 403V425M607.5 401V413M608.5 401V421M609.5 403V419M610.5 405V423M611.5 403V419M612.5 407V421M613.5 405V419M614.5 401V423M615.5 401V427M616.5 401V419M617.5 401V421M618.5 403V425M619.5 401V421M620.5 401V427M621.5 401V415M622.5 399V421M623.5 405V425M624.5 403V427M625.5 407V421M626.5 401V425M627.5 403V413M628.5 403V421M629.5 401V421M630.5 401V413M631.5 401V421M632.5 407V417M633.5 407V419M634.5 401V423M635.5 405V421M636.5 399V423M637.5 401V425M638.5 401V421M639.5 405V413M640.5 401V423M641.5 403V415M642.5 399V415M643.5 407V419M644.5 403V425M645.5 401V419M646.5 407V423M647.5 401V423M648.5 401V419M649.5 397V423M650.5 407V423M651.5 407V413M652.5 401V423M653.5 407V427M654.5 401V419M655.5 401V423M656.5 407V419M657.5 405V423M658.5 405V423M659.5 241V254M660.5 240V254M661.5 243V252M662.5 240V256M663.5 240V252M664.5 238V256M665.5 240V259M666.5 243V259M667.5 240V252M668.5 239V254M669.5 243V254M670.5 240V254M671.5 241V256M672.5 243V256M673.5 241V252M674.5 405V421M675.5 403V421M676.5 403V419M677.5 401V419M678.5 401V425M679.5 403V421M680.5 401V427M681.5 403V419M682.5 405V423M683.5 407V417M684.5 401V423M685.5 405V425M686.5 399V421M687.5 239V254M688.5 245V256M689.5 245V254M690.5 243V254M691.5 240V256M692.5 245V252M693.5 241V256M694.5 240V254M695.5 240V254M696.5 240V256M697.5 241V254M698.5 238V254M699.5 241V254M700.5 240V254M701.5 405V423M702.5 399V417M703.5 401V423M704.5 403V417M705.5 401V423M706.5 401V419M707.5 401V427M708.5 401V423M709.5 401V421M710.5 405V427M711.5 401V419M712.5 403V419M713.5 397V425M714.5 401V423M715.5 401V425M716.5 401V417M717.5 397V423M718.5 403V425M719.5 401V423M720.5 401V423M721.5 401V419M722.5 403V425M723.5 401V423M724.5 405V427M725.5 401V417M726.5 407V427M727.5 401V415M728.5 407V421M729.5 407V423M730.5 405V417M731.5 405V419M732.5 401V423M733.5 405V419M734.5 401V421M735.5 403V421M736.5 401V419M737.5 403V425M738.5 399V423M739.5 403V413M740.5 405V417M741.5 403V423M742.5 403V421M743.5 401V423M744.5 401V423M745.5 401V421M746.5 397V423M747.5 401V419M748.5 403V423M749.5 401V419M750.5 401V417M751.5 401V421M752.5 401V423M753.5 403V415M754.5 403V415M755.5 403V423M756.5 403V415M757.5 403V421M758.5 407V417M759.5 405V427M760.5 403V423M761.5 401V427M762.5 401V427M763.5 407V417M764.5 405V425M765.5 399V421M766.5 403V417M767.5 405V419M768.5 405V417M769.5 403V425M770.5 401V419M771.5 403V421M772.5 399V419M773.5 401V425M774.5 403V425M775.5 401V423M776.5 401V423M777.5 403V421M778.5 405V423M779.5 403V425M780.5 401V427M781.5 403V421M782.5 405V419M783.5 407V423M784.5 401V423M785.5 401V419M786.5 403V415M787.5 405V419M788.5 403V427M789.5 403V423M790.5 401V413M791.5 399V417M792.5 403V421M793.5 403V425M794.5 401V419M795.5 403V413M796.5 397V421M797.5 239V254M798.5 240V256M799.5 241V254M800.5 241V254M801.5 240V258M802.5 240V252M803.5 239V256M804.5 243V256M805.5 240V254M806.5 238V256M807.5 240V254M808.5 241V254M809.5 245V256M810.5 240V258M811.5 238V256M812.5 401V419M813.5 399V423M814.5 397V423M815.5 407V417M816.5 401V423M817.5 403V423M818.5 405V419M819.5 401V421M820.5 399V425M821.5 405V423M822.5 397V423M823.5 403V423M824.5 403V423M825.5 401V417M826.5 401V413M827.5 401V423M828.5 403V423M829.5 403V419M830.5 403V421M831.5 405V423M832.5 401V423M833.5 407V419M834.5 405V413M835.5 401V419M836.5 403V425M837.5 403V421M838.5 405V421M839.5 401V425M840.5 403V423M841.5 403V427M842.5 401V423M843.5 403V425M844.5 401V423M845.5 403V421M846.5 401V423M847.5 399V425M848.5 401V413M849.5 401V425M850.5 401V417M851.5 397V415M852.5 403V423M853.5 403V423M854.5 399V423M855.5 401V423M856.5 405V425M857.5 399V425M858.5 407V425M859.5 401V419M860.5 401V413M861.5 405V423M862.5 403V423M863.5 403V419M864.5 401V417M865.5 403V419M866.5 401V421M867.5 397V419M868.5 401V423M869.5 401V421M870.5 407V423M871.5 405V423M872.5 399V421M873.5 401V423M874.5 401V423M875.5 403V419M876.5 405V417M877.5 405V419M878.5 397V419M879.5 403V427M880.5 397V423M881.5 401V423M882.5 401V423M883.5 401V423M884.5 401V425M885.5 401V419M886.5 403V423M887.5 401V423M888.5 401V423M889.5 403V423M890.5 403V421M891.5 401V421M892.5 405V415M893.5 405V413M894.5 401V419M895.5 407V423M896.5 401V425M897.5 401V423M898.5 403V423M899.5 403V423M900.5 401V421M901.5 401V423M902.5 403V423M903.5 401V421M904.5 405V423M905.5 401V423M906.5 405V419M907.5 401V421M908.5 403V423M909.5 401V417M910.5 401V421M911.5 403V417M912.5 401V419M913.5 407V423M914.5 401V427M915.5 401V421M916.5 407V423M917.5 403V421M918.5 401V423M919.5 401V419M920.5 401V413M921.5 401V423M922.5 403V423M923.5 403V423M924.5 401V423M925.5 401V423M926.5 407V421M927.5 403V423M928.5 401V419M929.5 403V425M930.5 405V423M931.5 405V423M932.5 403V423M933.5 401V423M934.5 401V421M935.5 243V256M936.5 241V254M937.5 240V254M938.5 241V254M939.5 241V258M940.5 240V256M941.5 243V254M942.5 240V259M943.5 238V256M944.5 240V256M945.5 245V254M946.5 239V256M947.5 240V256M948.5 240V256M949.5 405V423M950.5 401V425M951.5 401V423M952.5 401V423M953.5 401V427M954.5 401V415M955.5 401V421M956.5 397V421M957.5 401V423M958.5 401V419M959.5 401V423M960.5 407V423M961.5 401V423M962.5 240V254M963.5 240V256M964.5 243V256M965.5 240V256M966.5 240V258M967.5 240V256M968.5 243V256M969.5 240V254M970.5 240V252M971.5 243V254M972.5 243V254M973.5 240V254M974.5 240V254M975.5 238V256M976.5 240V254M977.5 401V423M978.5 401V423M979.5 403V421M980.5 407V425M981.5 399V423M982.5 407V423M983.5 401V423M984.5 403V413M985.5 397V427M986.5 403V419M987.5 401V417M988.5 401V423M989.5 401V417M990.5 407V423M991.5 401V425M992.5 403V423M993.5 403V425M994.5 405V423M995.5 401V423M996.5 403V423M997.5 401V425M998.5 403V419M999.5 401V417M1000.5 401V415M1001.5 401V417M1002.5 401V423M1003.5 403V425M1004.5 397V423M1005.5 401V423M1006.5 403V423M1007.5 401V421M1008.5 407V415M1009.5 403V423M1010.5 397V423M1011.5 403V425M1012.5 401V427M1013.5 403V423M1014.5 405V413M1015.5 403V423M1016.5 401V425M1017.5 240V254M1018.5 240V256M1019.5 240V254M1020.5 240V256M1021.5 243V254M1022.5 243V254M1023.5 240V254M1024.5 240V259M1025.5 241V256M1026.5 240V254M1027.5 240V256M1028.5 241V256M1029.5 238V256M1030.5 243V256M1031.5 238V254M1032.5 397V419M1033.5 407V423M1034.5 403V423M1035.5 407V423M1036.5 403V423M1037.5 403V423M1038.5 403V419M1039.5 403V423M1040.5 403V417M1041.5 401V413M1042.5 405V425M1043.5 403V421M1044.5 405V423M1045.5 240V254M1046.5 240V254M1047.5 240V254M1048.5 241V258M1049.5 238V256M1050.5 238V252M1051.5 243V256M1052.5 245V254M1053.5 238V254M1054.5 241V258M1055.5 245V254M1056.5 240V252M1057.5 241V254M1058.5 240V250M1059.5 397V423M1060.5 401V427M1061.5 401V425M1062.5 401V413M1063.5 403V419M1064.5 403V419M1065.5 399V423M1066.5 403V425M1067.5 403V415M1068.5 403V423M1069.5 401V425M1070.5 401V427M1071.5 403V413M1072.5 238V256M1073.5 243V252M1074.5 240V256M1075.5 240V258M1076.5 240V250M1077.5 240V256M1078.5 240V256M1079.5 240V256M1080.5 240V256M1081.5 241V254M1082.5 240V256M1083.5 245V256M1084.5 240V254M1085.5 238V259M1086.5 243V256M1087.5 401V423M1088.5 407V423M1089.5 403V421M1090.5 401V425M1091.5 401V423M1092.5 403V425M1093.5 405V419M1094.5 397V419M1095.5 401V423M1096.5 405V425M1097.5 399V423M1098.5 405V425M1099.5 403V419M1100.5 405V423M1101.5 403V425M1102.5 401V415M1103.5 403V423M1104.5 401V423M1105.5 407V419M1106.5 403V423M1107.5 401V419M1108.5 401V423M1109.5 405V423M1110.5 401V423M1111.5 405V419M1112.5 403V425M1113.5 405V423M1114.5 401V423M1115.5 401V419M1116.5 401V423M1117.5 401V423M1118.5 401V423M1119.5 401V415M1120.5 407V421M1121.5 401V423M1122.5 405V417M1123.5 403V421M1124.5 403V413M1125.5 399V427M1126.5 405V423M1127.5 403V419M1128.5 405V421M1129.5 407V423M1130.5 405V427M1131.5 401V413M1132.5 401V419M1133.5 401V415M1134.5 403V425M1135.5 401V425M1136.5 407V415M1137.5 403V421M1138.5 401V427M1139.5 401V423M1140.5 403V427M1141.5 241V254M1142.5 240V252M1143.5 245V259M1144.5 240V250M1145.5 240V254M1146.5 245V258M1147.5 243V250M1148.5 243V256M1149.5 241V259M1150.5 238V252M1151.5 243V258M1152.5 241V254M1153.5 241V256M1154.5 239V254M1155.5 240V252M1156.5 401V417M1157.5 401V417M1158.5 403V413M1159.5 403V419M1160.5 399V425M1161.5 401V425M1162.5 405V425M1163.5 401V423M1164.5 401V425M1165.5 405V423M1166.5 401V421M1167.5 405V423M1168.5 403V417M1169.5 401V415M1170.5 403V423M1171.5 401V425M1172.5 401V421M1173.5 401V419M1174.5 405V421M1175.5 401V423M1176.5 401V425M1177.5 401V427M1178.5 399V425M1179.5 403V419M1180.5 401V419M1181.5 401V419M1182.5 401V427M1183.5 407V425M1184.5 401V419M1185.5 405V415M1186.5 403V421M1187.5 407V413M1188.5 405V421M1189.5 401V413M1190.5 405V423M1191.5 401V421M1192.5 407V419M1193.5 403V417M1194.5 401V423M1195.5 403V419M1196.5 239V252M1197.5 241V254M1198.5 240V254M1199.5 241V256M1200.5 243V256M1201.5 240V252M1202.5 243V254M1203.5 243V250M1204.5 243V254M1205.5 243V258M1206.5 240V250M1207.5 245V254M1208.5 243V254M1209.5 240V256M1210.5 240V252M1211.5 240V256M1212.5 238V254M1213.5 240V254M1214.5 240V256M1215.5 243V258M1216.5 240V256M1217.5 240V256M1218.5 238V258M1219.5 245V254M1220.5 240V256M1221.5 240V250M1222.5 315V323M1223.5 309V323M1224.5 309V327M1225.5 307V321M1226.5 311V323M1227.5 307V325M1228.5 311V325M1229.5 313V323M1230.5 313V327M1231.5 307V323M1232.5 311V325M1233.5 309V323M1234.5 311V323M1235.5 311V327M1236.5 309V325M1237.5 313V323M1238.5 313V329M1239.5 311V325M1240.5 313V325M1241.5 311V329M1242.5 313V325M1243.5 309V325M1244.5 311V329M1245.5 313V329M1246.5 313V327M1247.5 309V325M1248.5 315V329M1249.5 309V325M1250.5 311V325M1251.5 311V321M1252.5 311V325M1253.5 307V323M1254.5 315V327M1255.5 315V327M1256.5 313V327M1257.5 313V321M1258.5 311V323M1259.5 311V323M1260.5 311V329M1261.5 311V323M1262.5 311V325M1263.5 315V323M1264.5 309V327M1265.5 309V325M1266.5 315V325M1267.5 309V325M1268.5 311V323M1269.5 309V323M1270.5 309V325M1271.5 309V323M1272.5 309V325M1273.5 313V327M1274.5 311V327M1275.5 309V327M1276.5 311V325M1277.5 311V325M1278.5 309V323M1279.5 309V325M1280.5 311V325M1281.5 307V325M1282.5 313V323M1283.5 311V325M1284.5 309V329M1285.5 309V327M1286.5 309V321M1287.5 313V325M1288.5 309V325M1289.5 311V327M1290.5 309V323M1291.5 315V327M1292.5 309V325M1293.5 311V327M1294.5 311V327M1295.5 313V325M1296.5 313V327M1297.5 313V325M1298.5 313V327M1299.5 315V323M1300.5 313V321M1301.5 313V325M1302.5 311V329M1303.5 311V325M1304.5 313V327M1305.5 311V325M1306.5 311V325M1307.5 313V323M1308.5 311V325M1309.5 311V325M1310.5 313V327M1311.5 311V325M1312.5 309V325M1313.5 309V325M1314.5 311V321M1315.5 315V325M1316.5 313V327M1317.5 315V323M1318.5 311V329M1319.5 307V321M1320.5 311V325M1321.5 315V327M1322.5 311V329M1323.5 311V325M1324.5 311V325M1325.5 311V325M1326.5 311V329M1327.5 311V325M1328.5 309V325M1329.5 311V325M1330.5 311V327M1331.5 315V325M1332.5 311V327M1333.5 315V325M1334.5 311V327M1335.5 309V325M1336.5 315V327M1337.5 311V323M1338.5 313V327M1339.5 313V329M1340.5 313V325M1341.5 309V323M1342.5 311V325M1343.5 309V323M1344.5 311V327M1345.5 311V329M1346.5 311V321M1347.5 311V327M1348.5 309V327M1349.5 307V325M1350.5 313V325M1351.5 311V323M1352.5 311V325M1353.5 309V327M1354.5 311V329M1355.5 311V325M1356.5 309V323M1357.5 313V323M1358.5 309V323M1359.5 311V327M1360.5 311V327M1361.5 309V321M1362.5 313V325M1363.5 313V325M1364.5 309V323M1365.5 309V329M1366.5 311V325M1367.5 311V325M1368.5 309V327M1369.5 311V329M1370.5 311V327M1371.5 309V321M1372.5 315V327M1373.5 309V327M1374.5 313V325M1375.5 311V329M1376.5 311V329M1377.5 309V325M1378.5 313V323M1379.5 309V327M1380.5 311V327M1381.5 309V323M1382.5 311V323M1383.5 315V323M1384.5 311V323M1385.5 311V325M1386.5 311V321M1387.5 309V327M1388.5 311V323M1389.5 309V323M1390.5 309V321M1391.5 311V325M1392.5 309V327M1393.5 309V323M1394.5 313V323M1395.5 311V327M1396.5 313V323M1397.5 311V327M1398.5 311V329M1399.5 309V329M1400.5 311V323M1401.5 311V323M1402.5 313V323M1403.5 313V325M1404.5 311V323M1405.5 311V323M1406.5 313V323M1407.5 311V325M1408.5 309V327M1409.5 311V327M1410.5 311V325M1411.5 311V321M1412.5 309V327M1413.5 309V327M1414.5 309V325M1415.5 311V325M1416.5 309V321M1417.5 309V323M1418.5 309V327M1419.5 309V325M1420.5 315V327M1421.5 313V327M1422.5 309V323M1423.5 307V327M1424.5 311V325M1425.5 311V327M1426.5 311V323M1427.5 313V325M1428.5 311V323M1429.5 309V329M1430.5 313V327M1431.5 307V321M1432.5 309V323M1433.5 309V325M1434.5 307V325M1435.5 311V323M1436.5 313V325M1437.5 313V323M1438.5 311V327M1439.5 309V321M1440.5 313V327M1441.5 309V321M1442.5 313V327M1443.5 307V323M1444.5 309V327M1445.5 309V329M1446.5 313V321M1447.5 311V325M1448.5 313V327M1449.5 309V321M1450.5 315V325M1451.5 315V327M1452.5 313V327M1453.5 311V325M1454.5 309V327M1455.5 311V325M1456.5 315V323M1457.5 313V321M1458.5 313V327M1459.5 309V325M1460.5 315V327M1461.5 311V323M1462.5 309V325M1463.5 311V323M1464.5 309V323M1465.5 313V327M1466.5 309V323M1467.5 311V325M1468.5 315V325M1469.5 309V327M1470.5 309V325M1471.5 309V327M1472.5 311V327M1473.5 309V327M1474.5 311V325M1475.5 313V327M1476.5 309V323M1477.5 311V323M1478.5 309V323M1479.5 309V327M1480.5 311V323M1481.5 309V325M1482.5 311V323M1483.5 309V321M1484.5 315V327M1485.5 309V327M1486.5 315V325M1487.5 309V325M1488.5 311V323M1489.5 311V321M1490.5 315V327M1491.5 311V329M1492.5 311V323M1493.5 309V323M1494.5 307V327M1495.5 313V323M1496.5 309V327M1497.5 313V329M1498.5 309V327M1499.5 313V327M1500.5 309V323M1501.5 313V325M1502.5 311V325M1503.5 311V327M1504.5 309V321M1505.5 311V327M1506.5 313V327M1507.5 315V329M1508.5 311V325M1509.5 309V323M1510.5 311V321M1511.5 311V323M1512.5 311V329M1513.5 309V321M1514.5 311V323M1515.5 313V321M1516.5 313V327M1517.5 313V325M1518.5 309V327M1519.5 311V325M1520.5 309V325M1521.5 311V327M1522.5 315V323M1523.5 309V325M1524.5 311V325M1525.5 309V321M1526.5 309V325M1527.5 315V329M1528.5 313V329M1529.5 315V327M1530.5 313V321M1531.5 311V327M1532.5 309V325M1533.5 315V325M1534.5 311V323M1535.5 309V327M1536.5 307V323M1537.5 311V325M1538.5 309V327M1539.5 311V325M1540.5 311V325M1541.5 311V325M1542.5 309V323M1543.5 313V325M1544.5 309V327M1545.5 309V321M1546.5 311V323M1547.5 311V325M1548.5 309V325M1549.5 309V325M1550.5 311V321M1551.5 311V321M1552.5 311V327M1553.5 311V327M1554.5 313V323M1555.5 315V327M1556.5 309V327M1557.5 311V323M1558.5 315V325M1559.5 313V323M1560.5 313V321M1561.5 309V325M1562.5 307V325M1563.5 309V323M1564.5 313V325M1565.5 313V327M1566.5 313V325M1567.5 315V327M1568.5 309V327M1569.5 309V327M1570.5 311V327M1571.5 309V325M1572.5 313V329M1573.5 313V321M1574.5 311V321M1575.5 311V327M1576.5 309V329M1577.5 311V323M1578.5 309V325M1579.5 313V325M1580.5 309V321" fill="none" stroke="#0a5ea8" stroke-width="1" />
<path d="M412.5 245V420M522.5 245V420M549.5 245V420M659.5 245V420M687.5 245V420M797.5 245V420M935.5 245V420M962.5 245V420M1017.5 245V420M1045.5 245V420M1072.5 245V420M1141.5 245V420M1196.5 245V420M398.5 245V420M425.5 245V420M535.5 245V420M563.5 245V420M673.5 245V420M700.5 245V420M811.5 245V420M948.5 245V420M976.5 245V420M1031.5 245V420M1058.5 245V420M1086.5 245V420M1155.5 245V420M1221.5 245V318" fill="none" stroke="#0a5ea8" stroke-width="1" />
<path d="M258.5 270.5 l5.5 5.5 l-5.5 5.5 l-5.5 -5.5z" fill="#f4ea1c" stroke="#1b3f9a" stroke-width="1" />
<text x="258" y="372.8" font-size="12" fill="#1b63ab" textLength="107" lengthAdjust="spacingAndGlyphs" >MODBUS RTU - Ch A</text>
<circle cx="1549.4" cy="163.3" r="6.2" fill="#ffffff" stroke="#0f5699" stroke-width="3"/>
<path d="M1547.3 163.3 h4.2 M1549.4 161.2 v4.2" fill="none" stroke="#0f5699" stroke-width="2" />
<path d="M1553.5 167.5 l10 9.5" fill="none" stroke="#0f5699" stroke-width="4.2" />
<line x1="258" y1="349.5" x2="413" y2="349.5" stroke="#111111" stroke-width="1.2" />
<line x1="1208" y1="349.5" x2="1580" y2="349.5" stroke="#111111" stroke-width="1.2" />
<rect x="413.5" y="339.5" width="794.5" height="20" fill="#f9f9f9" stroke="#ee1111" stroke-width="1.2" />
<path d="M412.5 349.5 L416.0 341.5 H422.0 L425.5 349.5 L422.0 357.5 H416.0 Z" fill="#c3ced6" stroke="#111111" stroke-width="1.35" />
<text x="419.0" y="353.9" font-size="12.3" fill="#333333" text-anchor="middle" >0</text>
<path d="M426.5 349.5 L430.0 341.5 H532.0 L535.5 349.5 L532.0 357.5 H430.0 Z" fill="#fba52b" stroke="#111111" stroke-width="1.35" />
<text x="481.0" y="353.9" font-size="12.3" fill="#333333" text-anchor="middle" textLength="65" lengthAdjust="spacingAndGlyphs" >Slave ID - 7F</text>
<path d="M535.5 349.5 L539.0 341.5 H545.5 L549 349.5 L545.5 357.5 H539.0 Z" fill="#6e808a" stroke="#111111" stroke-width="1.35" />
<text x="542.25" y="353.9" font-size="12.3" fill="#ffffff" text-anchor="middle" >1</text>
<path d="M549.5 349.5 L553.0 341.5 H559.5 L563 349.5 L559.5 357.5 H553.0 Z" fill="#c3ced6" stroke="#111111" stroke-width="1.35" />
<text x="556.25" y="353.9" font-size="12.3" fill="#333333" text-anchor="middle" >0</text>
<path d="M563.5 349.5 L567.0 341.5 H669.5 L673 349.5 L669.5 357.5 H567.0 Z" fill="#69ba6d" stroke="#111111" stroke-width="1.35" />
<text x="618.25" y="353.9" font-size="12.3" fill="#ffffff" text-anchor="middle" textLength="68" lengthAdjust="spacingAndGlyphs" >Function - 7F</text>
<path d="M673 349.5 L676.5 341.5 H683.5 L687 349.5 L683.5 357.5 H676.5 Z" fill="#6e808a" stroke="#111111" stroke-width="1.35" />
<text x="680.0" y="353.9" font-size="12.3" fill="#ffffff" text-anchor="middle" >1</text>
<path d="M687.5 349.5 L691.0 341.5 H697.0 L700.5 349.5 L697.0 357.5 H691.0 Z" fill="#c3ced6" stroke="#111111" stroke-width="1.35" />
<text x="694.0" y="353.9" font-size="12.3" fill="#333333" text-anchor="middle" >0</text>
<path d="M701 349.5 L704.5 341.5 H807.5 L811 349.5 L807.5 357.5 H704.5 Z" fill="#5e6ec2" stroke="#111111" stroke-width="1.35" />
<text x="756.0" y="353.9" font-size="12.3" fill="#ffffff" text-anchor="middle" textLength="48" lengthAdjust="spacingAndGlyphs" >Data - 7F</text>
<path d="M811 349.5 L814.5 341.5 H821.5 L825 349.5 L821.5 357.5 H814.5 Z" fill="#6e808a" stroke="#111111" stroke-width="1.35" />
<text x="818.0" y="353.9" font-size="12.3" fill="#ffffff" text-anchor="middle" >1</text>
<path d="M935 349.5 L938.5 341.5 H945.0 L948.5 349.5 L945.0 357.5 H938.5 Z" fill="#c3ced6" stroke="#111111" stroke-width="1.35" />
<text x="941.75" y="353.9" font-size="12.3" fill="#333333" text-anchor="middle" >0</text>
<path d="M949 349.5 L952.5 341.5 H1054.5 L1058 349.5 L1054.5 357.5 H952.5 Z" fill="#4ca8f0" stroke="#111111" stroke-width="1.35" />
<text x="1003.5" y="353.9" font-size="12.3" fill="#ffffff" text-anchor="middle" textLength="47" lengthAdjust="spacingAndGlyphs" >CRC - 5D</text>
<path d="M1058.5 349.5 L1062.0 341.5 H1068.5 L1072 349.5 L1068.5 357.5 H1062.0 Z" fill="#6e808a" stroke="#111111" stroke-width="1.35" />
<text x="1065.25" y="353.9" font-size="12.3" fill="#ffffff" text-anchor="middle" >1</text>
<path d="M1072.5 349.5 L1076.0 341.5 H1082.5 L1086 349.5 L1082.5 357.5 H1076.0 Z" fill="#c3ced6" stroke="#111111" stroke-width="1.35" />
<text x="1079.25" y="353.9" font-size="12.3" fill="#333333" text-anchor="middle" >0</text>
<path d="M1086.5 349.5 L1090.0 341.5 H1192.5 L1196 349.5 L1192.5 357.5 H1090.0 Z" fill="#4ca8f0" stroke="#111111" stroke-width="1.35" />
<text x="1141.25" y="353.9" font-size="12.3" fill="#ffffff" text-anchor="middle" textLength="45" lengthAdjust="spacingAndGlyphs" >CRC - EF</text>
<path d="M1196 349.5 L1199.5 341.5 H1206.0 L1209.5 349.5 L1206.0 357.5 H1199.5 Z" fill="#ee2a2a" stroke="#111111" stroke-width="1.35" />
<text x="1202.75" y="353.9" font-size="12.3" fill="#ffffff" text-anchor="middle" >0</text>
<rect x="225" y="563" width="1375" height="337" fill="#ffffff" />
<path d="M844.5 563 L853.8 583 H969.5 L978.8 563" fill="#ffffff" stroke="#a9c9e8" stroke-width="1" />
<text x="867" y="577.3" font-size="11.5" fill="#1b63ab" textLength="88" lengthAdjust="spacingAndGlyphs" >MODBUS RTU -...</text>
<path d="M959.5 569.5 l5.5 5.5 M965 569.5 l-5.5 5.5" fill="none" stroke="#1b4f8a" stroke-width="1.3" />
<rect x="227.5" y="590.5" width="75" height="21" fill="#ffffff" rx="3" stroke="#8dbbe6" stroke-width="1" />
<path d="M243.5 594.5 H237.5 V606.8 H251 V603" fill="none" stroke="#1d4f86" stroke-width="2" />
<path d="M241.5 604.5 q1 -6 6.5 -6.3 v-3.2 l5.2 4.2 l-5.2 4.2 v-3 q-4.2 0.3 -6.5 4.1z" fill="#1d4f86" />
<text x="262" y="604.5" font-size="12" fill="#1d4f86" textLength="35" lengthAdjust="spacingAndGlyphs" >Export</text>
<rect x="311.5" y="590.5" width="114" height="21" fill="#ffffff" rx="3" stroke="#8dbbe6" stroke-width="1" />
<rect x="323" y="600.2" width="9.5" height="4.6" rx="2.3" transform="rotate(-48 327.7 602.5)" fill="none" stroke="#1d4f86" stroke-width="1.6"/>
<rect x="328.5" y="594.8" width="9.5" height="4.6" rx="2.3" transform="rotate(-48 333.2 597.1)" fill="none" stroke="#1d4f86" stroke-width="1.6"/>
<text x="348.2" y="604.5" font-size="12" fill="#1d4f86" textLength="69.4" lengthAdjust="spacingAndGlyphs" >Daten zu Text</text>
<rect x="434.5" y="590.5" width="76.5" height="21" fill="#ffffff" rx="3" stroke="#8dbbe6" stroke-width="1" />
<rect x="448.3" y="595.5" width="5.2" height="11.5" fill="#9dbcd8" />
<rect x="442.6" y="593.8" width="23" height="13.5" fill="none" stroke="#1d4f86" stroke-width="1.5" />
<rect x="442.6" y="596" width="23" height="1.1" fill="#1d4f86" />
<rect x="447.9" y="594" width="1.1" height="13" fill="#1d4f86" />
<rect x="453.4" y="594" width="1.1" height="13" fill="#1d4f86" />
<rect x="459.2" y="594" width="1.1" height="13" fill="#1d4f86" />
<text x="471.2" y="604.5" font-size="12" fill="#1d4f86" textLength="32" lengthAdjust="spacingAndGlyphs" >Felder</text>
<rect x="520.5" y="590.5" width="38.5" height="21" fill="#ffffff" rx="3" stroke="#8dbbe6" stroke-width="1" />
<text x="530.3" y="608.8" font-size="21.5" fill="#1d4f86" font-weight="bold" textLength="15.3" lengthAdjust="spacingAndGlyphs" >A</text>
<path d="M544 597 l2.8 -4 l2.8 4z" fill="#1d4f86" />
<rect x="563.0" y="590.5" width="38.0" height="21" fill="#ffffff" rx="3" stroke="#8dbbe6" stroke-width="1" />
<text x="574.2" y="608.8" font-size="17.3" fill="#1d4f86" font-weight="bold" textLength="12.2" lengthAdjust="spacingAndGlyphs" >A</text>
<path d="M585.6 593 l3.1 4 l3.1 -4z" fill="#1d4f86" />
<rect x="610.5" y="590.5" width="189" height="21" fill="#ffffff" rx="3" stroke="#8dbbe6" stroke-width="1" />
<path d="M614 590.5 h90 v21 h-90 a3.5 3.5 0 0 1 -3.5 -3.5 v-14 a3.5 3.5 0 0 1 3.5 -3.5z" fill="#0f5699" />
<text x="629.8" y="604.8" font-size="12" fill="#ffffff" textLength="54.4" lengthAdjust="spacingAndGlyphs" >Alle Puffer</text>
<text x="704.8" y="604.8" font-size="12" fill="#1d4f86" textLength="92.6" lengthAdjust="spacingAndGlyphs" >Derzeitiger Puffer</text>
<rect x="1102.0" y="590.5" width="98.0" height="21" fill="#ffffff" rx="3" stroke="#8dbbe6" stroke-width="1" />
<path d="M1113 596 h12 l-4.5 5.5 v6.5 l-3 1.5 v-8z" fill="none" stroke="#1d4f86" stroke-width="1.2" />
<text x="1136" y="605" font-size="12" fill="#1d4f86" textLength="58" lengthAdjust="spacingAndGlyphs" >Filter hinzu</text>
<text x="1209.4" y="605.5" font-size="11.5" fill="#3a3a3a" textLength="40" lengthAdjust="spacingAndGlyphs" >Suchen:</text>
<rect x="1255.5" y="590.5" width="124" height="21" fill="#ffffff" rx="3" stroke="#8dbbe6" stroke-width="1" />
<text x="1261" y="605.5" font-size="12" fill="#1d4f86" textLength="54" lengthAdjust="spacingAndGlyphs" >Alle Felder</text>
<path d="M1365.5 598 h9 l-4.5 8.5z" fill="#0f5699" />
<rect x="1385.5" y="590.5" width="124" height="21" fill="#ffffff" stroke="#8dbbe6" stroke-width="1" />
<text x="1388.5" y="605" font-size="11.5" fill="#8a8a8a" textLength="86" lengthAdjust="spacingAndGlyphs" >[Wert eingeben]</text>
<rect x="1515.5" y="590.5" width="39" height="21" fill="#ffffff" rx="3" stroke="#8dbbe6" stroke-width="1" />
<rect x="1557.5" y="590.5" width="39" height="21" fill="#ffffff" rx="3" stroke="#8dbbe6" stroke-width="1" />
<path d="M1525.2 607.6 L1535.1 594.4 L1545 607.6" fill="none" stroke="#cbcbcb" stroke-width="2.8" />
<path d="M1566.6 594.2 L1577 607.4 L1587.4 594.2" fill="none" stroke="#cbcbcb" stroke-width="2.8" />
<rect x="227" y="618" width="1371" height="24" fill="#92bfe9" />
<rect x="227" y="617" width="1371" height="1" fill="#9fa0a3" />
<rect x="227" y="642" width="1371" height="1" fill="#9fa0a3" />
<rect x="227" y="617" width="1" height="282" fill="#9fa0a3" />
<rect x="340" y="617" width="1" height="282" fill="#9fa0a3" />
<rect x="409" y="617" width="1" height="282" fill="#9fa0a3" />
<rect x="497" y="617" width="1" height="282" fill="#9fa0a3" />
<rect x="578" y="617" width="1" height="282" fill="#9fa0a3" />
<rect x="648" y="617" width="1" height="282" fill="#9fa0a3" />
<rect x="723" y="617" width="1" height="282" fill="#9fa0a3" />
<rect x="803" y="617" width="1" height="282" fill="#9fa0a3" />
<rect x="888" y="617" width="1" height="282" fill="#9fa0a3" />
<rect x="1110" y="617" width="1" height="282" fill="#9fa0a3" />
<rect x="1164" y="617" width="1" height="282" fill="#9fa0a3" />
<rect x="1264" y="617" width="1" height="282" fill="#9fa0a3" />
<rect x="1353" y="617" width="1" height="282" fill="#9fa0a3" />
<rect x="1435" y="617" width="1" height="282" fill="#9fa0a3" />
<rect x="1518" y="617" width="1" height="282" fill="#9fa0a3" />
<rect x="227" y="668" width="1371" height="1" fill="#9fa0a3" />
<rect x="227" y="694" width="1371" height="1" fill="#9fa0a3" />
<rect x="227" y="720" width="1371" height="1" fill="#9fa0a3" />
<rect x="227" y="746" width="1371" height="1" fill="#9fa0a3" />
<rect x="227" y="772" width="1371" height="1" fill="#9fa0a3" />
<rect x="227" y="798" width="1371" height="1" fill="#9fa0a3" />
<rect x="227" y="824" width="1371" height="1" fill="#9fa0a3" />
<rect x="227" y="850" width="1371" height="1" fill="#9fa0a3" />
<rect x="227" y="876" width="1371" height="1" fill="#9fa0a3" />
<rect x="227" y="902" width="1371" height="1" fill="#9fa0a3" />
<text x="241.5" y="633.8" font-size="11.3" fill="#ffffff" font-weight="bold" >Buffer Number</text>
<path d="M324.10353125 631.2 l3.6 -3.6 l3.6 3.6 l-3.6 3.6z" fill="none" stroke="#ffffff" stroke-width="0.9" />
<text x="354.5" y="633.8" font-size="11.3" fill="#ffffff" font-weight="bold" >Packet</text>
<path d="M394.43543750000003 631.2 l3.6 -3.6 l3.6 3.6 l-3.6 3.6z" fill="none" stroke="#ffffff" stroke-width="0.9" />
<text x="423.5" y="633.8" font-size="11.3" fill="#ffffff" font-weight="bold" >Start Time</text>
<path d="M482.0521875 631.2 l3.6 -3.6 l3.6 3.6 l-3.6 3.6z" fill="none" stroke="#ffffff" stroke-width="0.9" />
<text x="511.5" y="633.8" font-size="11.3" fill="#ffffff" font-weight="bold" >End Time</text>
<path d="M565.6487187500001 631.2 l3.6 -3.6 l3.6 3.6 l-3.6 3.6z" fill="none" stroke="#ffffff" stroke-width="0.9" />
<text x="592.5" y="633.8" font-size="11.3" fill="#ffffff" font-weight="bold" >Master</text>
<path d="M632.42484375 631.2 l3.6 -3.6 l3.6 3.6 l-3.6 3.6z" fill="none" stroke="#ffffff" stroke-width="0.9" />
<text x="662.5" y="633.8" font-size="11.3" fill="#ffffff" font-weight="bold" >Slave ID</text>
<path d="M709.96759375 631.2 l3.6 -3.6 l3.6 3.6 l-3.6 3.6z" fill="none" stroke="#ffffff" stroke-width="0.9" />
<text x="737.5" y="633.8" font-size="11.3" fill="#ffffff" font-weight="bold" >Function</text>
<path d="M788.694828125 631.2 l3.6 -3.6 l3.6 3.6 l-3.6 3.6z" fill="none" stroke="#ffffff" stroke-width="0.9" />
<text x="817.5" y="633.8" font-size="11.3" fill="#ffffff" font-weight="bold" >Exception</text>
<path d="M874.99634375 631.2 l3.6 -3.6 l3.6 3.6 l-3.6 3.6z" fill="none" stroke="#ffffff" stroke-width="0.9" />
<text x="902.5" y="633.8" font-size="11.3" fill="#ffffff" font-weight="bold" >Data</text>
<path d="M930.490984375 631.2 l3.6 -3.6 l3.6 3.6 l-3.6 3.6z" fill="none" stroke="#ffffff" stroke-width="0.9" />
<text x="1124.5" y="633.8" font-size="11.3" fill="#ffffff" font-weight="bold" >CRC</text>
<path d="M1152.4821562500001 631.2 l3.6 -3.6 l3.6 3.6 l-3.6 3.6z" fill="none" stroke="#ffffff" stroke-width="0.9" />
<text x="1178.5" y="633.8" font-size="11.3" fill="#ffffff" font-weight="bold" >Parity Check</text>
<path d="M1250.458578125 631.2 l3.6 -3.6 l3.6 3.6 l-3.6 3.6z" fill="none" stroke="#ffffff" stroke-width="0.9" />
<text x="1278.5" y="633.8" font-size="11.3" fill="#ffffff" font-weight="bold" >Valid Start</text>
<path d="M1337.262296875 631.2 l3.6 -3.6 l3.6 3.6 l-3.6 3.6z" fill="none" stroke="#ffffff" stroke-width="0.9" />
<text x="1367.5" y="633.8" font-size="11.3" fill="#ffffff" font-weight="bold" >Valid End</text>
<path d="M1421.858828125 631.2 l3.6 -3.6 l3.6 3.6 l-3.6 3.6z" fill="none" stroke="#ffffff" stroke-width="0.9" />
<text x="1449.5" y="633.8" font-size="11.3" fill="#ffffff" font-weight="bold" >Valid CRC</text>
<path d="M1506.999875 631.2 l3.6 -3.6 l3.6 3.6 l-3.6 3.6z" fill="none" stroke="#ffffff" stroke-width="0.9" />
<text x="1532.5" y="633.8" font-size="11.3" fill="#ffffff" font-weight="bold" >Valid Gap</text>
<path d="M1587.4926875 631.2 l3.6 -3.6 l3.6 3.6 l-3.6 3.6z" fill="none" stroke="#ffffff" stroke-width="0.9" />
<text x="334" y="660" font-size="11" fill="#bd171d" text-anchor="end" >62</text>
<text x="403" y="660" font-size="11" fill="#bd171d" text-anchor="end" >1</text>
<text x="490.5" y="660" font-size="11" fill="#bd171d" text-anchor="end" >1,163 ms</text>
<text x="571.5" y="660" font-size="11" fill="#bd171d" text-anchor="end" >7,196 ms</text>
<path d="M584.5 655.3 L585.9 654.2 L587.4 656 L591.5 651 L592.1 651.5 L587.8 658.7 L587.0 658.7 Z" fill="#bd171d" />
<text x="654" y="660" font-size="11" fill="#bd171d" >7F</text>
<text x="729" y="660" font-size="11" fill="#bd171d" >7F</text>
<text x="894" y="660" font-size="11" fill="#bd171d" >7F</text>
<text x="1116" y="660" font-size="11" fill="#bd171d" >5D EF</text>
<path d="M1271.5 651 l6 7.5 M1277.5 651 l-6 7.5" fill="none" stroke="#bd171d" stroke-width="2" />
<path d="M1360.5 651 l6 7.5 M1366.5 651 l-6 7.5" fill="none" stroke="#bd171d" stroke-width="2" />
<path d="M1442.5 651 l6 7.5 M1448.5 651 l-6 7.5" fill="none" stroke="#bd171d" stroke-width="2" />
<path d="M1525 655.3 L1526.4 654.2 L1527.9 656 L1532 651 L1532.6 651.5 L1528.3 658.7 L1527.5 658.7 Z" fill="#bd171d" />
<text x="334" y="686" font-size="11" fill="#bd171d" text-anchor="end" >61</text>
<text x="403" y="686" font-size="11" fill="#bd171d" text-anchor="end" >1</text>
<text x="490.5" y="686" font-size="11" fill="#bd171d" text-anchor="end" >-10,4 ns</text>
<text x="571.5" y="686" font-size="11" fill="#bd171d" text-anchor="end" >8,128 ms</text>
<path d="M584.5 681.3 L585.9 680.2 L587.4 682 L591.5 677 L592.1 677.5 L587.8 684.7 L587.0 684.7 Z" fill="#bd171d" />
<text x="654" y="686" font-size="11" fill="#bd171d" >7F</text>
<text x="729" y="686" font-size="11" fill="#bd171d" >7E</text>
<text x="894" y="686" font-size="11" fill="#bd171d" >D7 FF FD</text>
<text x="1116" y="686" font-size="11" fill="#bd171d" >5D E5</text>
<path d="M1271.5 677 l6 7.5 M1277.5 677 l-6 7.5" fill="none" stroke="#bd171d" stroke-width="2" />
<path d="M1360.5 677 l6 7.5 M1366.5 677 l-6 7.5" fill="none" stroke="#bd171d" stroke-width="2" />
<path d="M1442.5 677 l6 7.5 M1448.5 677 l-6 7.5" fill="none" stroke="#bd171d" stroke-width="2" />
<path d="M1525 681.3 L1526.4 680.2 L1527.9 682 L1532 677 L1532.6 677.5 L1528.3 684.7 L1527.5 684.7 Z" fill="#bd171d" />
<text x="334" y="712" font-size="11" fill="#bd171d" text-anchor="end" >60</text>
<text x="403" y="712" font-size="11" fill="#bd171d" text-anchor="end" >1</text>
<text x="490.5" y="712" font-size="11" fill="#bd171d" text-anchor="end" >207,7 µs</text>
<text x="571.5" y="712" font-size="11" fill="#bd171d" text-anchor="end" >5,201 ms</text>
<path d="M584.5 707.3 L585.9 706.2 L587.4 708 L591.5 703 L592.1 703.5 L587.8 710.7 L587.0 710.7 Z" fill="#bd171d" />
<text x="654" y="712" font-size="11" fill="#bd171d" >7F</text>
<text x="729" y="712" font-size="11" fill="#bd171d" >7F</text>
<text x="1116" y="712" font-size="11" fill="#bd171d" >5D EF</text>
<path d="M1271.5 703 l6 7.5 M1277.5 703 l-6 7.5" fill="none" stroke="#bd171d" stroke-width="2" />
<path d="M1360 707.3 L1361.4 706.2 L1362.9 708 L1367 703 L1367.6 703.5 L1363.3 710.7 L1362.5 710.7 Z" fill="#bd171d" />
<path d="M1442.5 703 l6 7.5 M1448.5 703 l-6 7.5" fill="none" stroke="#bd171d" stroke-width="2" />
<path d="M1525 707.3 L1526.4 706.2 L1527.9 708 L1532 703 L1532.6 703.5 L1528.3 710.7 L1527.5 710.7 Z" fill="#bd171d" />
<text x="334" y="738" font-size="11" fill="#bd171d" text-anchor="end" >59</text>
<text x="403" y="738" font-size="11" fill="#bd171d" text-anchor="end" >1</text>
<text x="490.5" y="738" font-size="11" fill="#bd171d" text-anchor="end" >207,7 µs</text>
<text x="571.5" y="738" font-size="11" fill="#bd171d" text-anchor="end" >6,657 ms</text>
<path d="M584.5 733.3 L585.9 732.2 L587.4 734 L591.5 729 L592.1 729.5 L587.8 736.7 L587.0 736.7 Z" fill="#bd171d" />
<text x="654" y="738" font-size="11" fill="#bd171d" >7E</text>
<text x="729" y="738" font-size="11" fill="#bd171d" >BF</text>
<text x="894" y="738" font-size="11" fill="#bd171d" >FF</text>
<text x="1116" y="738" font-size="11" fill="#bd171d" >8F 17</text>
<path d="M1271.5 729 l6 7.5 M1277.5 729 l-6 7.5" fill="none" stroke="#bd171d" stroke-width="2" />
<path d="M1360.5 729 l6 7.5 M1366.5 729 l-6 7.5" fill="none" stroke="#bd171d" stroke-width="2" />
<path d="M1442.5 729 l6 7.5 M1448.5 729 l-6 7.5" fill="none" stroke="#bd171d" stroke-width="2" />
<path d="M1525 733.3 L1526.4 732.2 L1527.9 734 L1532 729 L1532.6 729.5 L1528.3 736.7 L1527.5 736.7 Z" fill="#bd171d" />
<text x="334" y="764" font-size="11" fill="#bd171d" text-anchor="end" >58</text>
<text x="403" y="764" font-size="11" fill="#bd171d" text-anchor="end" >1</text>
<text x="490.5" y="764" font-size="11" fill="#bd171d" text-anchor="end" >-10,4 ns</text>
<text x="571.5" y="764" font-size="11" fill="#bd171d" text-anchor="end" >7,086 ms</text>
<path d="M584.5 759.3 L585.9 758.2 L587.4 760 L591.5 755 L592.1 755.5 L587.8 762.7 L587.0 762.7 Z" fill="#bd171d" />
<text x="654" y="764" font-size="11" fill="#bd171d" >7F</text>
<text x="729" y="764" font-size="11" fill="#bd171d" >CF</text>
<text x="894" y="764" font-size="11" fill="#bd171d" >FF FD</text>
<text x="1116" y="764" font-size="11" fill="#bd171d" >05 65</text>
<path d="M1271.5 755 l6 7.5 M1277.5 755 l-6 7.5" fill="none" stroke="#bd171d" stroke-width="2" />
<path d="M1360.5 755 l6 7.5 M1366.5 755 l-6 7.5" fill="none" stroke="#bd171d" stroke-width="2" />
<path d="M1442.5 755 l6 7.5 M1448.5 755 l-6 7.5" fill="none" stroke="#bd171d" stroke-width="2" />
<path d="M1525 759.3 L1526.4 758.2 L1527.9 760 L1532 755 L1532.6 755.5 L1528.3 762.7 L1527.5 762.7 Z" fill="#bd171d" />
<text x="334" y="790" font-size="11" fill="#bd171d" text-anchor="end" >57</text>
<text x="403" y="790" font-size="11" fill="#bd171d" text-anchor="end" >1</text>
<text x="490.5" y="790" font-size="11" fill="#bd171d" text-anchor="end" >-5,333 ns</text>
<text x="571.5" y="790" font-size="11" fill="#bd171d" text-anchor="end" >8,128 ms</text>
<path d="M584.5 785.3 L585.9 784.2 L587.4 786 L591.5 781 L592.1 781.5 L587.8 788.7 L587.0 788.7 Z" fill="#bd171d" />
<text x="654" y="790" font-size="11" fill="#bd171d" >7F</text>
<text x="729" y="790" font-size="11" fill="#bd171d" >7E</text>
<text x="894" y="790" font-size="11" fill="#bd171d" >D7 FF FD</text>
<text x="1116" y="790" font-size="11" fill="#bd171d" >5D E5</text>
<path d="M1271.5 781 l6 7.5 M1277.5 781 l-6 7.5" fill="none" stroke="#bd171d" stroke-width="2" />
<path d="M1360.5 781 l6 7.5 M1366.5 781 l-6 7.5" fill="none" stroke="#bd171d" stroke-width="2" />
<path d="M1442.5 781 l6 7.5 M1448.5 781 l-6 7.5" fill="none" stroke="#bd171d" stroke-width="2" />
<path d="M1525 785.3 L1526.4 784.2 L1527.9 786 L1532 781 L1532.6 781.5 L1528.3 788.7 L1527.5 788.7 Z" fill="#bd171d" />
<text x="334" y="816" font-size="11" fill="#bd171d" text-anchor="end" >56</text>
<text x="403" y="816" font-size="11" fill="#bd171d" text-anchor="end" >1</text>
<text x="490.5" y="816" font-size="11" fill="#bd171d" text-anchor="end" >-14,15 ns</text>
<text x="571.5" y="816" font-size="11" fill="#bd171d" text-anchor="end" >8,128 ms</text>
<path d="M584.5 811.3 L585.9 810.2 L587.4 812 L591.5 807 L592.1 807.5 L587.8 814.7 L587.0 814.7 Z" fill="#bd171d" />
<text x="654" y="816" font-size="11" fill="#bd171d" >7F</text>
<text x="729" y="816" font-size="11" fill="#bd171d" >7F</text>
<text x="894" y="816" font-size="11" fill="#bd171d" >D9 FF FD</text>
<text x="1116" y="816" font-size="11" fill="#bd171d" >E7 E1</text>
<path d="M1271.5 807 l6 7.5 M1277.5 807 l-6 7.5" fill="none" stroke="#bd171d" stroke-width="2" />
<path d="M1360.5 807 l6 7.5 M1366.5 807 l-6 7.5" fill="none" stroke="#bd171d" stroke-width="2" />
<path d="M1442.5 807 l6 7.5 M1448.5 807 l-6 7.5" fill="none" stroke="#bd171d" stroke-width="2" />
<path d="M1525 811.3 L1526.4 810.2 L1527.9 812 L1532 807 L1532.6 807.5 L1528.3 814.7 L1527.5 814.7 Z" fill="#bd171d" />
<text x="334" y="842" font-size="11" fill="#bd171d" text-anchor="end" >55</text>
<text x="403" y="842" font-size="11" fill="#bd171d" text-anchor="end" >1</text>
<text x="490.5" y="842" font-size="11" fill="#bd171d" text-anchor="end" >1,163 ms</text>
<text x="571.5" y="842" font-size="11" fill="#bd171d" text-anchor="end" >8,653 ms</text>
<path d="M584.5 837.3 L585.9 836.2 L587.4 838 L591.5 833 L592.1 833.5 L587.8 840.7 L587.0 840.7 Z" fill="#bd171d" />
<text x="654" y="842" font-size="11" fill="#bd171d" >7F</text>
<text x="729" y="842" font-size="11" fill="#bd171d" >7E</text>
<text x="894" y="842" font-size="11" fill="#bd171d" >BF FF</text>
<text x="1116" y="842" font-size="11" fill="#bd171d" >8F 17</text>
<path d="M1271.5 833 l6 7.5 M1277.5 833 l-6 7.5" fill="none" stroke="#bd171d" stroke-width="2" />
<path d="M1360.5 833 l6 7.5 M1366.5 833 l-6 7.5" fill="none" stroke="#bd171d" stroke-width="2" />
<path d="M1442.5 833 l6 7.5 M1448.5 833 l-6 7.5" fill="none" stroke="#bd171d" stroke-width="2" />
<path d="M1525 837.3 L1526.4 836.2 L1527.9 838 L1532 833 L1532.6 833.5 L1528.3 840.7 L1527.5 840.7 Z" fill="#bd171d" />
<text x="334" y="868" font-size="11" fill="#bd171d" text-anchor="end" >54</text>
<text x="403" y="868" font-size="11" fill="#bd171d" text-anchor="end" >1</text>
<text x="490.5" y="868" font-size="11" fill="#bd171d" text-anchor="end" >-9,778 ns</text>
<text x="571.5" y="868" font-size="11" fill="#bd171d" text-anchor="end" >8,128 ms</text>
<path d="M584.5 863.3 L585.9 862.2 L587.4 864 L591.5 859 L592.1 859.5 L587.8 866.7 L587.0 866.7 Z" fill="#bd171d" />
<text x="654" y="868" font-size="11" fill="#bd171d" >7F</text>
<text x="729" y="868" font-size="11" fill="#bd171d" >7F</text>
<text x="894" y="868" font-size="11" fill="#bd171d" >D9 FF FD</text>
<text x="1116" y="868" font-size="11" fill="#bd171d" >E7 E1</text>
<path d="M1271.5 859 l6 7.5 M1277.5 859 l-6 7.5" fill="none" stroke="#bd171d" stroke-width="2" />
<path d="M1360.5 859 l6 7.5 M1366.5 859 l-6 7.5" fill="none" stroke="#bd171d" stroke-width="2" />
<path d="M1442.5 859 l6 7.5 M1448.5 859 l-6 7.5" fill="none" stroke="#bd171d" stroke-width="2" />
<path d="M1525 863.3 L1526.4 862.2 L1527.9 864 L1532 859 L1532.6 859.5 L1528.3 866.7 L1527.5 866.7 Z" fill="#bd171d" />
<text x="334" y="894" font-size="11" fill="#bd171d" text-anchor="end" >53</text>
<text x="403" y="894" font-size="11" fill="#bd171d" text-anchor="end" >1</text>
<text x="490.5" y="894" font-size="11" fill="#bd171d" text-anchor="end" >-9,263 ns</text>
<text x="571.5" y="894" font-size="11" fill="#bd171d" text-anchor="end" >7,294 ms</text>
<path d="M584.5 889.3 L585.9 888.2 L587.4 890 L591.5 885 L592.1 885.5 L587.8 892.7 L587.0 892.7 Z" fill="#bd171d" />
<text x="654" y="894" font-size="11" fill="#bd171d" >F9</text>
<text x="729" y="894" font-size="11" fill="#bd171d" >DF</text>
<text x="894" y="894" font-size="11" fill="#bd171d" >F9 FF FD</text>
<text x="1116" y="894" font-size="11" fill="#bd171d" >1F 6B</text>
<path d="M1271.5 885 l6 7.5 M1277.5 885 l-6 7.5" fill="none" stroke="#bd171d" stroke-width="2" />
<path d="M1360.5 885 l6 7.5 M1366.5 885 l-6 7.5" fill="none" stroke="#bd171d" stroke-width="2" />
<path d="M1442.5 885 l6 7.5 M1448.5 885 l-6 7.5" fill="none" stroke="#bd171d" stroke-width="2" />
<path d="M1525 889.3 L1526.4 888.2 L1527.9 890 L1532 885 L1532.6 885.5 L1528.3 892.7 L1527.5 892.7 Z" fill="#bd171d" />
<rect x="225" y="899" width="1375" height="1" fill="#efefef" />
</svg></body></html>
